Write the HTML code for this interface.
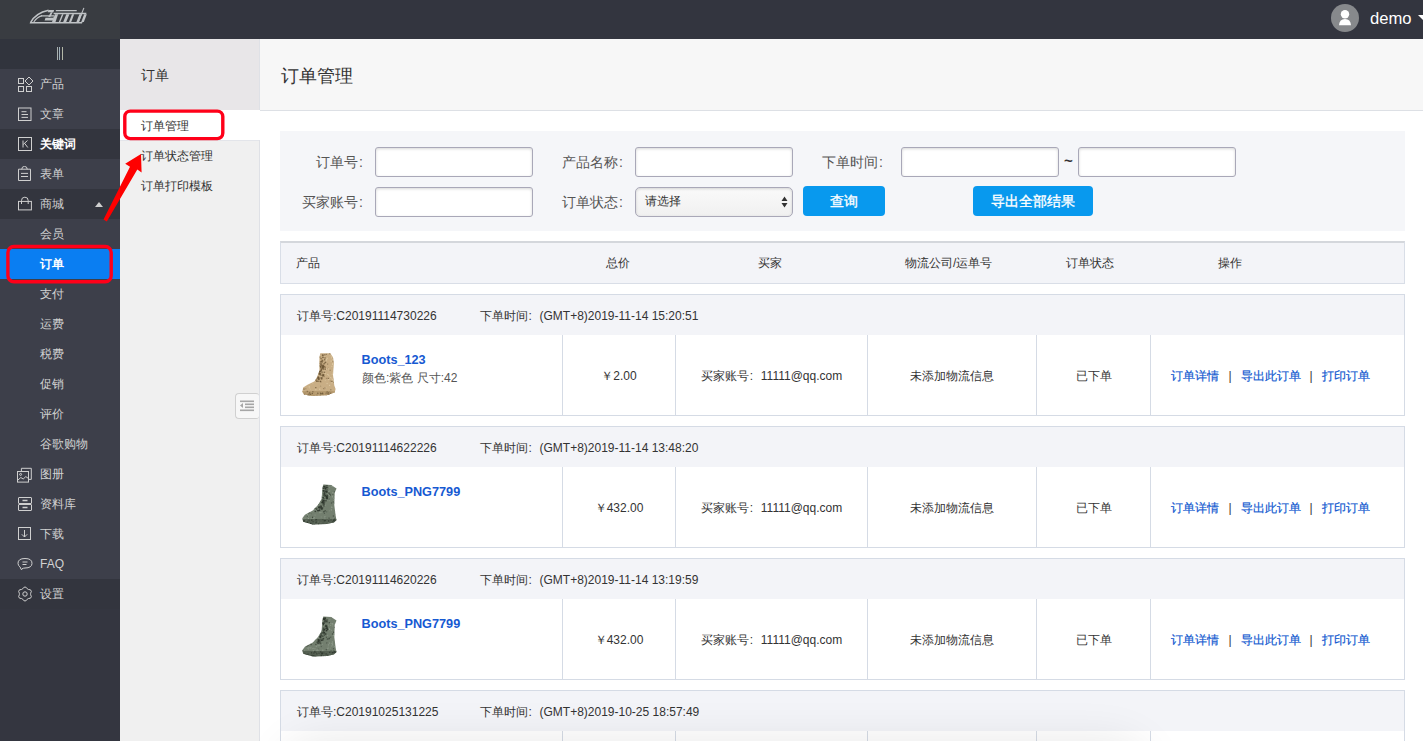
<!DOCTYPE html>
<html><head><meta charset="utf-8">
<style>
*{box-sizing:border-box;margin:0;padding:0}
html,body{width:1423px;height:741px;overflow:hidden;background:#fff;font-family:"Liberation Sans",sans-serif;font-size:12px;color:#333}
.abs{position:absolute}
#topbar{left:0;top:0;width:1423px;height:39px;background:#33353f}
#logo{left:0;top:0;width:120px;height:39px;background:#393c41}
#side{left:0;top:39px;width:120px;height:702px;background:#343640}
#toggle{left:0;top:39px;width:120px;height:30px;background:#31343d}
.mi{position:absolute;left:0;width:120px;height:30px;background:#3d3f4a;color:#d2d2d2;font-size:12px;line-height:30px;padding-left:40px}
.mi.dk{background:#33353e}
.mi.b{color:#fff;font-weight:bold}
.mi.act{background:#0a7ef2;color:#fff;font-weight:bold}
.mi svg{position:absolute;left:17px;top:7px}
#sub{left:120px;top:39px;width:140px;height:702px;background:#f0f0f0;border-right:1px solid #dfe1e6}
#subhd{left:120px;top:39px;width:139px;height:71px;background:#e8e6e8;font-size:14px;line-height:73px;padding-left:21px;color:#333}
.si{position:absolute;left:120px;width:139px;height:30px;line-height:32px;padding-left:21px;font-size:12px;color:#333}
#main{left:260px;top:39px;width:1163px;height:702px;background:#fff}
#mainhd{left:260px;top:39px;width:1163px;height:72px;background:#f7f7f7;border-bottom:1px solid #dde0e5;font-size:18px;line-height:74px;padding-left:21px;color:#333}
#filter{left:280px;top:131px;width:1125px;height:100px;background:#f5f6f9}
.lbl{position:absolute;font-size:14px;color:#555;line-height:30px;white-space:nowrap}
.co{margin-left:1px}
.inp{position:absolute;height:30px;background:#fff;border:1px solid #a9a8b8;border-radius:3px;box-shadow:inset 0 1px 3px rgba(0,0,0,.16)}
.btn{position:absolute;height:30px;background:#0899ee;color:#fff;border-radius:4px;font-size:14px;line-height:30px;text-align:center;-webkit-text-stroke:0.35px #fff}
#thd{left:280px;top:241px;width:1125px;height:43px;background:#f3f4f8;border:1px solid #d9dee7;border-top:2px solid #d4d7dc}
.th{position:absolute;top:242px;line-height:43px;font-size:12px;color:#333}
.ord{position:absolute;left:280px;width:1125px;height:122px;border:1px solid #d5dbe5;background:#fff}
.ohd{position:absolute;left:0;top:0;width:1123px;height:40px;background:#f3f4f8;line-height:42px;padding-left:16px;font-size:12px;color:#333}
.cell{position:absolute;top:41px;height:80px;line-height:80px;text-align:center;font-size:12px;color:#333}
.vl{position:absolute;top:40px;width:1px;height:80px;background:#d5dbe5}
.lk{color:#1259d0;-webkit-text-stroke:0.2px #1259d0}
.fc{display:inline-block;width:12px;padding-left:1px;text-align:left}
</style></head><body>
<div id="topbar" class="abs"></div>
<div id="logo" class="abs"></div>
<div id="side" class="abs"></div>
<div id="toggle" class="abs"></div>
<div class="mi" style="top:69px"><svg width="17" height="17" viewBox="0 0 17 17" fill="none" stroke="#cfcfcf" stroke-width="1"><rect x="1.5" y="2.5" width="5" height="5"/><path d="M12 1 L16 5 L12 9 L8 5 Z"/><rect x="1.5" y="10.5" width="5" height="5"/><rect x="9.5" y="10.5" width="5" height="5"/></svg>产品</div>
<div class="mi" style="top:99px"><svg width="17" height="17" viewBox="0 0 17 17" fill="none" stroke="#cfcfcf" stroke-width="1"><rect x="1.5" y="2" width="12.5" height="12.5"/><path d="M4.5 5.7 H9.5 M4.5 8.5 H11 M4.5 11.4 H11"/></svg>文章</div>
<div class="mi dk b" style="top:129px"><svg width="17" height="17" viewBox="0 0 17 17" fill="none" stroke="#cfcfcf" stroke-width="1"><rect x="1.5" y="1.5" width="13" height="13"/><path d="M6 4.5 V11.5 M10.5 4.5 L6.2 8.5 M7.6 7.3 L10.8 11.5"/></svg>关键词</div>
<div class="mi" style="top:159px"><svg width="17" height="17" viewBox="0 0 17 17" fill="none" stroke="#cfcfcf" stroke-width="1"><path d="M5 3.2 H1.5 V14.5 H13.5 V3.2 H10"/><path d="M4.8 3.2 Q4.8 0.4 7.5 0.4 Q10.2 0.4 10.2 3.2 Z"/><path d="M4 7.4 H11 M4 10.5 H11"/></svg>表单</div>
<div class="mi dk" style="top:189px"><svg width="17" height="17" viewBox="0 0 17 17" fill="none" stroke="#cfcfcf" stroke-width="1"><rect x="1.5" y="5.4" width="12.9" height="8.5"/><path d="M4.5 8 V4.5 Q4.5 1.2 7.85 1.2 Q11.2 1.2 11.2 4.5 V8"/></svg>商城<span style="position:absolute;left:95px;top:13px;width:0;height:0;border-left:4px solid transparent;border-right:4px solid transparent;border-bottom:5px solid #cfcfcf"></span></div>
<div class="mi" style="top:219px">会员</div>
<div class="mi act" style="top:249px">订单</div>
<div class="mi" style="top:279px">支付</div>
<div class="mi" style="top:309px">运费</div>
<div class="mi" style="top:339px">税费</div>
<div class="mi" style="top:369px">促销</div>
<div class="mi" style="top:399px">评价</div>
<div class="mi" style="top:429px">谷歌购物</div>
<div class="mi" style="top:459px"><svg width="17" height="17" viewBox="0 0 17 17" fill="none" stroke="#cfcfcf" stroke-width="1"><path d="M4.4 5 V2.3 H14.3 V13.4 H12"/><rect x="0.5" y="5.5" width="11" height="10.6"/><circle cx="3.6" cy="8.4" r="1"/><path d="M1 14 L3.8 11.5 L6.2 13 L8.8 10.6 L11.2 12.3"/></svg>图册</div>
<div class="mi" style="top:489px"><svg width="17" height="17" viewBox="0 0 17 17" fill="none" stroke="#cfcfcf" stroke-width="1"><rect x="1.5" y="1.5" width="13" height="6" rx="0.5"/><rect x="1.5" y="8.5" width="13" height="6" rx="0.5"/><path d="M5.5 4.5 H10.5 M5.5 11.5 H10.5" stroke-width="1.5"/></svg>资料库</div>
<div class="mi" style="top:519px"><svg width="17" height="17" viewBox="0 0 17 17" fill="none" stroke="#cfcfcf" stroke-width="1"><rect x="1.5" y="1.5" width="12" height="12"/><path d="M7.5 4 V11 M4.8 8.3 L7.5 11 L10.2 8.3"/></svg>下载</div>
<div class="mi" style="top:549px"><svg width="17" height="17" viewBox="0 0 17 17" fill="none" stroke="#cfcfcf" stroke-width="1"><path d="M4.5 13.8 Q3 11.5 3.2 11 Q1 9.8 1 7.3 Q1 2.5 8 2.5 Q15 2.5 15 7.3 Q15 12 8 12 Q6.5 12 5 12.8 Z"/><path d="M5.5 6 H10.5 M5.5 8.5 H9.5"/></svg>FAQ</div>
<div class="mi dk" style="top:579px"><svg width="17" height="17" viewBox="0 0 17 17" fill="none" stroke="#cfcfcf" stroke-width="1"><path d="M7.10,1.16 L8.90,1.16 L10.18,2.73 L11.47,3.48 L13.47,3.80 L14.37,5.36 L13.65,7.26 L13.65,8.74 L14.37,10.64 L13.47,12.20 L11.47,12.52 L10.18,13.27 L8.90,14.84 L7.10,14.84 L5.82,13.27 L4.53,12.52 L2.53,12.20 L1.63,10.64 L2.35,8.74 L2.35,7.26 L1.63,5.36 L2.53,3.80 L4.53,3.48 L5.82,2.73 Z" stroke-linejoin="round"/><circle cx="8" cy="8" r="2.2"/></svg>设置</div>

<div id="sub" class="abs"></div>
<div id="subhd" class="abs">订单</div>
<div class="si" style="top:110px;background:#fff;width:140px">订单管理</div>
<div class="abs" style="left:120px;top:140px;width:139px;height:1px;background:#e3e5ea"></div>
<div class="si" style="top:140px">订单状态管理</div>
<div class="si" style="top:170px">订单打印模板</div>

<div id="main" class="abs"></div>
<div id="mainhd" class="abs">订单管理</div>
<div id="filter" class="abs"></div>

<div class="lbl" style="left:316px;top:147px">订单号<span class="co">:</span></div>
<div class="inp" style="left:375px;top:147px;width:158px"></div>
<div class="lbl" style="left:302px;top:187px">买家账号<span class="co">:</span></div>
<div class="inp" style="left:375px;top:187px;width:158px"></div>
<div class="lbl" style="left:562px;top:147px">产品名称<span class="co">:</span></div>
<div class="inp" style="left:635px;top:147px;width:158px"></div>
<div class="lbl" style="left:562px;top:187px">订单状态<span class="co">:</span></div>
<div class="inp sel" style="left:635px;top:187px;width:158px;border-radius:5px;background:linear-gradient(#fafafa,#f0f0f0);font-size:12px;line-height:26px;padding-left:9px;color:#333">请选择<svg style="position:absolute;right:4px;top:8px" width="7" height="12" viewBox="0 0 7 12"><path d="M3.5 0.5 L6.5 5 H0.5 Z M3.5 11.5 L6.5 7 H0.5 Z" fill="#333"/></svg></div>
<div class="lbl" style="left:822px;top:147px">下单时间<span class="co">:</span></div>
<div class="inp" style="left:901px;top:147px;width:158px"></div>
<div class="abs" style="left:1064px;top:146px;line-height:30px;font-size:15px;font-weight:bold;color:#333">~</div>
<div class="inp" style="left:1078px;top:147px;width:158px"></div>
<div class="btn" style="left:803px;top:186px;width:82px">查询</div>
<div class="btn" style="left:973px;top:186px;width:120px">导出全部结果</div>

<div id="thd" class="abs"></div>
<div class="th" style="left:296px">产品</div>
<div class="th" style="left:606px">总价</div>
<div class="th" style="left:758px">买家</div>
<div class="th" style="left:905px">物流公司/运单号</div>
<div class="th" style="left:1066px">订单状态</div>
<div class="th" style="left:1218px">操作</div>
<div class="ord" style="top:294px">
<div class="ohd">订单号:C20191114730226<span style="position:absolute;left:198.5px">下单时间<span class="fc">:</span>(GMT+8)2019-11-14 15:20:51</span></div>
<div class="vl" style="left:281px"></div><div class="vl" style="left:394px"></div><div class="vl" style="left:586px"></div><div class="vl" style="left:755px"></div><div class="vl" style="left:869px"></div>
<div style="position:absolute;left:21px;top:58px;width:35px;height:44px"><svg width="35" height="44" viewBox="0 0 35 44"><defs><clipPath id="ct"><path d="M18.3,0.2 L28.4,0.2 L31.0,4.5 L31.9,9.8 L31.0,22.0 L32.3,32.6 L33.6,36.0 L32.7,39.6 L24.8,42.3 L9.9,43.1 L2.0,41.4 L0.3,38.8 L1.2,34.4 L5.5,31.7 L12.6,28.2 L15.2,23.8 L17.4,17.7 L17.4,4.5 Z"/></clipPath></defs><path d="M18.3,0.2 L28.4,0.2 L31.0,4.5 L31.9,9.8 L31.0,22.0 L32.3,32.6 L33.6,36.0 L32.7,39.6 L24.8,42.3 L9.9,43.1 L2.0,41.4 L0.3,38.8 L1.2,34.4 L5.5,31.7 L12.6,28.2 L15.2,23.8 L17.4,17.7 L17.4,4.5 Z" fill="#c9ae85"/><g clip-path="url(#ct)"><rect x="8.3" y="23.9" width="1.2" height="1.2" fill="#e2cfaa" opacity="0.76"/><rect x="16.6" y="25.6" width="1.2" height="1.2" fill="#6b5535" opacity="0.75"/><rect x="16.4" y="24.2" width="1.2" height="1.2" fill="#e2cfaa" opacity="0.80"/><rect x="16.5" y="36.8" width="1.2" height="1.2" fill="#c9ae85" opacity="0.50"/><rect x="30.1" y="10.2" width="1.2" height="1.2" fill="#e2cfaa" opacity="0.73"/><rect x="18.3" y="32.6" width="1.2" height="1.2" fill="#6b5535" opacity="0.38"/><rect x="33.5" y="1.9" width="1.2" height="1.2" fill="#6b5535" opacity="0.71"/><rect x="9.4" y="26.2" width="1.2" height="1.2" fill="#c9ae85" opacity="0.66"/><rect x="32.2" y="17.4" width="1.2" height="1.2" fill="#c9ae85" opacity="0.78"/><rect x="4.7" y="16.1" width="1.2" height="1.2" fill="#6b5535" opacity="0.37"/><rect x="7.6" y="42.5" width="1.2" height="1.2" fill="#c9ae85" opacity="0.69"/><rect x="29.9" y="18.5" width="1.2" height="1.2" fill="#c9ae85" opacity="0.59"/><rect x="18.7" y="17.9" width="1.2" height="1.2" fill="#e2cfaa" opacity="0.75"/><rect x="23.9" y="40.9" width="1.2" height="1.2" fill="#e2cfaa" opacity="0.80"/><rect x="23.5" y="7.2" width="1.2" height="1.2" fill="#e2cfaa" opacity="0.78"/><rect x="31.7" y="25.0" width="1.2" height="1.2" fill="#e2cfaa" opacity="0.62"/><rect x="34.6" y="11.8" width="1.2" height="1.2" fill="#6b5535" opacity="0.33"/><rect x="29.9" y="43.6" width="1.2" height="1.2" fill="#6b5535" opacity="0.47"/><rect x="2.3" y="39.5" width="1.2" height="1.2" fill="#6b5535" opacity="0.45"/><rect x="26.9" y="38.4" width="1.2" height="1.2" fill="#6b5535" opacity="0.60"/><rect x="26.7" y="16.6" width="1.2" height="1.2" fill="#e2cfaa" opacity="0.58"/><rect x="32.3" y="12.3" width="1.2" height="1.2" fill="#e2cfaa" opacity="0.80"/><rect x="10.8" y="3.4" width="1.2" height="1.2" fill="#6b5535" opacity="0.77"/><rect x="34.0" y="12.8" width="1.2" height="1.2" fill="#e2cfaa" opacity="0.38"/><rect x="1.5" y="38.2" width="1.2" height="1.2" fill="#e2cfaa" opacity="0.48"/><rect x="4.8" y="37.9" width="1.2" height="1.2" fill="#c9ae85" opacity="0.53"/><rect x="18.2" y="28.3" width="1.2" height="1.2" fill="#6b5535" opacity="0.61"/><rect x="32.9" y="22.3" width="1.2" height="1.2" fill="#c9ae85" opacity="0.62"/><rect x="25.0" y="41.2" width="1.2" height="1.2" fill="#c9ae85" opacity="0.79"/><rect x="18.2" y="24.1" width="1.2" height="1.2" fill="#6b5535" opacity="0.69"/><rect x="34.6" y="13.9" width="1.2" height="1.2" fill="#c9ae85" opacity="0.61"/><rect x="22.1" y="2.6" width="1.2" height="1.2" fill="#e2cfaa" opacity="0.53"/><rect x="23.8" y="15.5" width="1.2" height="1.2" fill="#e2cfaa" opacity="0.67"/><rect x="0.8" y="2.7" width="1.2" height="1.2" fill="#6b5535" opacity="0.78"/><rect x="8.8" y="20.1" width="1.2" height="1.2" fill="#e2cfaa" opacity="0.39"/><rect x="6.5" y="33.4" width="1.2" height="1.2" fill="#e2cfaa" opacity="0.45"/><rect x="13.2" y="34.0" width="1.2" height="1.2" fill="#6b5535" opacity="0.79"/><rect x="23.9" y="5.8" width="1.2" height="1.2" fill="#e2cfaa" opacity="0.63"/><rect x="9.4" y="14.4" width="1.2" height="1.2" fill="#c9ae85" opacity="0.62"/><rect x="3.4" y="26.4" width="1.2" height="1.2" fill="#e2cfaa" opacity="0.64"/><rect x="7.9" y="35.6" width="1.2" height="1.2" fill="#e2cfaa" opacity="0.34"/><rect x="26.0" y="9.6" width="1.2" height="1.2" fill="#c9ae85" opacity="0.44"/><rect x="27.5" y="1.5" width="1.2" height="1.2" fill="#e2cfaa" opacity="0.46"/><rect x="29.3" y="25.3" width="1.2" height="1.2" fill="#e2cfaa" opacity="0.47"/><rect x="29.0" y="3.8" width="1.2" height="1.2" fill="#e2cfaa" opacity="0.59"/><rect x="14.7" y="22.8" width="1.2" height="1.2" fill="#e2cfaa" opacity="0.53"/><rect x="22.2" y="12.8" width="1.2" height="1.2" fill="#c9ae85" opacity="0.32"/><rect x="14.5" y="8.8" width="1.2" height="1.2" fill="#c9ae85" opacity="0.77"/><rect x="30.8" y="43.4" width="1.2" height="1.2" fill="#c9ae85" opacity="0.58"/><rect x="34.5" y="31.6" width="1.2" height="1.2" fill="#6b5535" opacity="0.67"/><rect x="29.3" y="29.2" width="1.2" height="1.2" fill="#e2cfaa" opacity="0.57"/><rect x="31.1" y="37.9" width="1.2" height="1.2" fill="#e2cfaa" opacity="0.36"/><rect x="8.6" y="1.5" width="1.2" height="1.2" fill="#e2cfaa" opacity="0.75"/><rect x="31.5" y="25.4" width="1.2" height="1.2" fill="#6b5535" opacity="0.54"/><rect x="4.2" y="22.1" width="1.2" height="1.2" fill="#e2cfaa" opacity="0.63"/><rect x="18.4" y="18.2" width="1.2" height="1.2" fill="#6b5535" opacity="0.47"/><rect x="8.8" y="37.9" width="1.2" height="1.2" fill="#c9ae85" opacity="0.71"/><rect x="2.1" y="9.7" width="1.2" height="1.2" fill="#6b5535" opacity="0.57"/><rect x="28.6" y="7.5" width="1.2" height="1.2" fill="#e2cfaa" opacity="0.76"/><rect x="28.2" y="36.2" width="1.2" height="1.2" fill="#6b5535" opacity="0.54"/><rect x="20.0" y="17.6" width="1.2" height="1.2" fill="#e2cfaa" opacity="0.42"/><rect x="21.6" y="22.9" width="1.2" height="1.2" fill="#6b5535" opacity="0.54"/><rect x="27.2" y="0.1" width="1.2" height="1.2" fill="#6b5535" opacity="0.69"/><rect x="1.6" y="2.2" width="1.2" height="1.2" fill="#c9ae85" opacity="0.79"/><rect x="29.9" y="3.8" width="1.2" height="1.2" fill="#c9ae85" opacity="0.46"/><rect x="11.0" y="15.5" width="1.2" height="1.2" fill="#c9ae85" opacity="0.59"/><rect x="12.6" y="8.4" width="1.2" height="1.2" fill="#e2cfaa" opacity="0.51"/><rect x="4.5" y="0.2" width="1.2" height="1.2" fill="#c9ae85" opacity="0.70"/><rect x="19.8" y="1.9" width="1.2" height="1.2" fill="#c9ae85" opacity="0.60"/><rect x="27.4" y="16.7" width="1.2" height="1.2" fill="#6b5535" opacity="0.61"/><rect x="15.1" y="16.4" width="1.2" height="1.2" fill="#c9ae85" opacity="0.68"/><rect x="11.0" y="41.8" width="1.2" height="1.2" fill="#c9ae85" opacity="0.53"/><rect x="8.6" y="23.6" width="1.2" height="1.2" fill="#6b5535" opacity="0.70"/><rect x="7.9" y="5.7" width="1.2" height="1.2" fill="#6b5535" opacity="0.77"/><rect x="13.1" y="39.5" width="1.2" height="1.2" fill="#e2cfaa" opacity="0.36"/><rect x="24.2" y="41.3" width="1.2" height="1.2" fill="#c9ae85" opacity="0.63"/><rect x="25.7" y="24.8" width="1.2" height="1.2" fill="#6b5535" opacity="0.71"/><rect x="25.1" y="20.8" width="1.2" height="1.2" fill="#e2cfaa" opacity="0.69"/><rect x="1.6" y="4.0" width="1.2" height="1.2" fill="#6b5535" opacity="0.63"/><rect x="13.2" y="36.1" width="1.2" height="1.2" fill="#e2cfaa" opacity="0.72"/><rect x="4.2" y="37.1" width="1.2" height="1.2" fill="#c9ae85" opacity="0.72"/><rect x="33.3" y="25.5" width="1.2" height="1.2" fill="#6b5535" opacity="0.32"/><rect x="26.9" y="22.5" width="1.2" height="1.2" fill="#e2cfaa" opacity="0.35"/><rect x="26.2" y="41.1" width="1.2" height="1.2" fill="#6b5535" opacity="0.58"/><rect x="30.4" y="7.9" width="1.2" height="1.2" fill="#6b5535" opacity="0.42"/><rect x="6.3" y="11.0" width="1.2" height="1.2" fill="#c9ae85" opacity="0.43"/><rect x="21.0" y="41.3" width="1.2" height="1.2" fill="#c9ae85" opacity="0.78"/><rect x="13.1" y="10.4" width="1.2" height="1.2" fill="#c9ae85" opacity="0.72"/><rect x="33.8" y="18.3" width="1.2" height="1.2" fill="#c9ae85" opacity="0.38"/><rect x="14.0" y="39.1" width="1.2" height="1.2" fill="#e2cfaa" opacity="0.35"/><rect x="26.2" y="40.3" width="1.2" height="1.2" fill="#c9ae85" opacity="0.59"/><rect x="30.0" y="6.0" width="1.2" height="1.2" fill="#e2cfaa" opacity="0.37"/><rect x="18.0" y="41.1" width="1.2" height="1.2" fill="#e2cfaa" opacity="0.64"/><rect x="29.9" y="26.2" width="1.2" height="1.2" fill="#e2cfaa" opacity="0.74"/><rect x="10.8" y="11.8" width="1.2" height="1.2" fill="#c9ae85" opacity="0.40"/><rect x="19.9" y="10.5" width="1.2" height="1.2" fill="#c9ae85" opacity="0.69"/><rect x="5.0" y="43.6" width="1.2" height="1.2" fill="#c9ae85" opacity="0.65"/><rect x="7.2" y="25.5" width="1.2" height="1.2" fill="#6b5535" opacity="0.54"/><rect x="25.2" y="37.7" width="1.2" height="1.2" fill="#c9ae85" opacity="0.69"/><rect x="30.9" y="2.0" width="1.2" height="1.2" fill="#e2cfaa" opacity="0.75"/><rect x="22.7" y="34.2" width="1.2" height="1.2" fill="#6b5535" opacity="0.78"/><rect x="29.9" y="10.7" width="1.2" height="1.2" fill="#e2cfaa" opacity="0.69"/><rect x="4.8" y="27.4" width="1.2" height="1.2" fill="#6b5535" opacity="0.75"/><rect x="8.9" y="38.1" width="1.2" height="1.2" fill="#e2cfaa" opacity="0.39"/><rect x="3.2" y="35.2" width="1.2" height="1.2" fill="#6b5535" opacity="0.35"/><rect x="29.2" y="12.8" width="1.2" height="1.2" fill="#e2cfaa" opacity="0.53"/><rect x="25.7" y="14.8" width="1.2" height="1.2" fill="#6b5535" opacity="0.47"/><rect x="15.3" y="21.4" width="1.2" height="1.2" fill="#e2cfaa" opacity="0.62"/><rect x="26.0" y="21.6" width="1.2" height="1.2" fill="#e2cfaa" opacity="0.57"/><rect x="4.2" y="12.1" width="1.2" height="1.2" fill="#c9ae85" opacity="0.36"/><rect x="31.1" y="40.0" width="1.2" height="1.2" fill="#6b5535" opacity="0.56"/><rect x="24.5" y="29.9" width="1.2" height="1.2" fill="#e2cfaa" opacity="0.68"/><rect x="10.3" y="29.7" width="1.2" height="1.2" fill="#e2cfaa" opacity="0.35"/><rect x="33.1" y="14.9" width="1.2" height="1.2" fill="#6b5535" opacity="0.63"/><rect x="17.8" y="2.6" width="1.2" height="1.2" fill="#e2cfaa" opacity="0.64"/><rect x="19.8" y="8.0" width="1.2" height="1.2" fill="#e2cfaa" opacity="0.39"/><rect x="31.1" y="28.8" width="1.2" height="1.2" fill="#6b5535" opacity="0.35"/><rect x="19.6" y="40.5" width="1.2" height="1.2" fill="#c9ae85" opacity="0.58"/><rect x="22.7" y="20.1" width="1.2" height="1.2" fill="#e2cfaa" opacity="0.69"/><rect x="24.7" y="4.7" width="1.2" height="1.2" fill="#e2cfaa" opacity="0.68"/><rect x="19.0" y="32.5" width="1.2" height="1.2" fill="#e2cfaa" opacity="0.35"/><rect x="9.5" y="2.4" width="1.2" height="1.2" fill="#e2cfaa" opacity="0.32"/><rect x="17.7" y="10.9" width="1.2" height="1.2" fill="#e2cfaa" opacity="0.74"/><rect x="33.1" y="19.7" width="1.2" height="1.2" fill="#6b5535" opacity="0.48"/><rect x="29.6" y="4.9" width="1.2" height="1.2" fill="#e2cfaa" opacity="0.60"/><rect x="23.9" y="24.8" width="1.2" height="1.2" fill="#6b5535" opacity="0.39"/><rect x="6.6" y="18.3" width="1.2" height="1.2" fill="#c9ae85" opacity="0.71"/><rect x="26.2" y="26.0" width="1.2" height="1.2" fill="#e2cfaa" opacity="0.73"/><rect x="27.9" y="24.0" width="1.2" height="1.2" fill="#e2cfaa" opacity="0.58"/><rect x="7.1" y="11.0" width="1.2" height="1.2" fill="#e2cfaa" opacity="0.32"/><rect x="28.1" y="39.2" width="1.2" height="1.2" fill="#c9ae85" opacity="0.46"/><rect x="31.7" y="13.6" width="1.2" height="1.2" fill="#c9ae85" opacity="0.79"/><rect x="24.0" y="13.2" width="1.2" height="1.2" fill="#c9ae85" opacity="0.32"/><rect x="6.7" y="27.9" width="1.2" height="1.2" fill="#6b5535" opacity="0.69"/><rect x="23.2" y="21.6" width="1.2" height="1.2" fill="#c9ae85" opacity="0.40"/><rect x="27.4" y="9.3" width="1.2" height="1.2" fill="#c9ae85" opacity="0.36"/><rect x="9.9" y="28.9" width="1.2" height="1.2" fill="#e2cfaa" opacity="0.37"/><rect x="27.7" y="27.4" width="1.2" height="1.2" fill="#6b5535" opacity="0.31"/><rect x="21.6" y="22.3" width="1.2" height="1.2" fill="#c9ae85" opacity="0.57"/><rect x="32.5" y="14.2" width="1.2" height="1.2" fill="#e2cfaa" opacity="0.65"/><rect x="4.7" y="37.8" width="1.2" height="1.2" fill="#6b5535" opacity="0.66"/><rect x="25.9" y="15.1" width="1.2" height="1.2" fill="#e2cfaa" opacity="0.77"/><rect x="30.2" y="19.2" width="1.2" height="1.2" fill="#e2cfaa" opacity="0.54"/><rect x="3.8" y="1.9" width="1.2" height="1.2" fill="#6b5535" opacity="0.72"/><rect x="24.7" y="17.2" width="1.2" height="1.2" fill="#c9ae85" opacity="0.65"/><rect x="18.8" y="18.6" width="1.2" height="1.2" fill="#c9ae85" opacity="0.45"/><rect x="16.3" y="33.3" width="1.2" height="1.2" fill="#c9ae85" opacity="0.52"/><rect x="15.9" y="1.6" width="1.2" height="1.2" fill="#e2cfaa" opacity="0.48"/><rect x="13.0" y="23.3" width="1.2" height="1.2" fill="#c9ae85" opacity="0.41"/><rect x="0.1" y="9.2" width="1.2" height="1.2" fill="#e2cfaa" opacity="0.37"/><rect x="16.1" y="8.6" width="1.2" height="1.2" fill="#e2cfaa" opacity="0.31"/><rect x="20.5" y="22.2" width="1.2" height="1.2" fill="#6b5535" opacity="0.37"/><rect x="21.3" y="19.5" width="1.2" height="1.2" fill="#e2cfaa" opacity="0.33"/><rect x="0.8" y="19.7" width="1.2" height="1.2" fill="#c9ae85" opacity="0.32"/><rect x="25.0" y="10.5" width="1.2" height="1.2" fill="#6b5535" opacity="0.50"/><rect x="0.9" y="42.5" width="1.2" height="1.2" fill="#e2cfaa" opacity="0.42"/><rect x="13.6" y="8.4" width="1.2" height="1.2" fill="#e2cfaa" opacity="0.61"/><rect x="12.1" y="5.5" width="1.2" height="1.2" fill="#6b5535" opacity="0.70"/><rect x="10.2" y="43.2" width="1.2" height="1.2" fill="#c9ae85" opacity="0.69"/><rect x="33.7" y="21.5" width="1.2" height="1.2" fill="#e2cfaa" opacity="0.32"/><rect x="11.8" y="43.7" width="1.2" height="1.2" fill="#e2cfaa" opacity="0.35"/><rect x="23.9" y="42.6" width="1.2" height="1.2" fill="#6b5535" opacity="0.35"/><rect x="23.8" y="0.8" width="1.2" height="1.2" fill="#6b5535" opacity="0.54"/><rect x="6.6" y="22.4" width="1.2" height="1.2" fill="#e2cfaa" opacity="0.40"/><rect x="34.1" y="21.0" width="1.2" height="1.2" fill="#c9ae85" opacity="0.76"/><rect x="32.9" y="1.5" width="1.2" height="1.2" fill="#e2cfaa" opacity="0.68"/><rect x="22.1" y="17.4" width="1.2" height="1.2" fill="#e2cfaa" opacity="0.39"/><rect x="14.5" y="22.3" width="1.2" height="1.2" fill="#e2cfaa" opacity="0.57"/><rect x="27.2" y="17.7" width="1.2" height="1.2" fill="#c9ae85" opacity="0.72"/><rect x="19.4" y="40.6" width="1.2" height="1.2" fill="#e2cfaa" opacity="0.70"/><rect x="15.3" y="19.6" width="1.2" height="1.2" fill="#c9ae85" opacity="0.47"/><rect x="28.7" y="22.3" width="1.2" height="1.2" fill="#c9ae85" opacity="0.77"/><rect x="1.5" y="7.6" width="1.2" height="1.2" fill="#6b5535" opacity="0.71"/><rect x="3.2" y="30.4" width="1.2" height="1.2" fill="#6b5535" opacity="0.46"/><rect x="21.0" y="35.3" width="1.2" height="1.2" fill="#6b5535" opacity="0.74"/><rect x="30.5" y="19.8" width="1.2" height="1.2" fill="#e2cfaa" opacity="0.80"/><rect x="0.1" y="8.6" width="1.2" height="1.2" fill="#6b5535" opacity="0.47"/><rect x="10.9" y="19.8" width="1.2" height="1.2" fill="#e2cfaa" opacity="0.42"/><rect x="1.7" y="6.7" width="1.2" height="1.2" fill="#e2cfaa" opacity="0.59"/><rect x="0.4" y="10.1" width="1.2" height="1.2" fill="#e2cfaa" opacity="0.41"/><rect x="19.7" y="18.5" width="1.2" height="1.2" fill="#e2cfaa" opacity="0.69"/><rect x="18.7" y="8.3" width="1.2" height="1.2" fill="#e2cfaa" opacity="0.61"/><rect x="1.4" y="35.5" width="1.2" height="1.2" fill="#6b5535" opacity="0.73"/><rect x="3.5" y="41.5" width="1.2" height="1.2" fill="#e2cfaa" opacity="0.34"/><rect x="16.3" y="9.8" width="1.2" height="1.2" fill="#6b5535" opacity="0.62"/><rect x="26.6" y="38.4" width="1.2" height="1.2" fill="#e2cfaa" opacity="0.50"/><rect x="23.1" y="34.2" width="1.2" height="1.2" fill="#e2cfaa" opacity="0.72"/><rect x="20.8" y="35.9" width="1.2" height="1.2" fill="#e2cfaa" opacity="0.36"/><rect x="0.3" y="13.2" width="1.2" height="1.2" fill="#6b5535" opacity="0.47"/><rect x="6.7" y="33.2" width="1.2" height="1.2" fill="#e2cfaa" opacity="0.51"/><rect x="22.7" y="26.7" width="1.2" height="1.2" fill="#e2cfaa" opacity="0.42"/><rect x="29.3" y="2.7" width="1.2" height="1.2" fill="#e2cfaa" opacity="0.52"/><rect x="2.9" y="9.6" width="1.2" height="1.2" fill="#e2cfaa" opacity="0.67"/><rect x="7.2" y="9.6" width="1.2" height="1.2" fill="#c9ae85" opacity="0.77"/><rect x="18.8" y="18.4" width="1.2" height="1.2" fill="#e2cfaa" opacity="0.75"/><rect x="33.2" y="21.3" width="1.2" height="1.2" fill="#c9ae85" opacity="0.53"/><rect x="20.6" y="1.5" width="1.2" height="1.2" fill="#6b5535" opacity="0.39"/><rect x="3.4" y="31.8" width="1.2" height="1.2" fill="#e2cfaa" opacity="0.55"/><rect x="2.1" y="20.8" width="1.2" height="1.2" fill="#e2cfaa" opacity="0.67"/><rect x="9.7" y="19.0" width="1.2" height="1.2" fill="#e2cfaa" opacity="0.53"/><rect x="6.9" y="34.4" width="1.2" height="1.2" fill="#e2cfaa" opacity="0.35"/><rect x="10.5" y="18.1" width="1.2" height="1.2" fill="#6b5535" opacity="0.40"/><rect x="17.1" y="35.6" width="1.2" height="1.2" fill="#e2cfaa" opacity="0.79"/><rect x="34.3" y="38.6" width="1.2" height="1.2" fill="#e2cfaa" opacity="0.77"/><rect x="15.1" y="41.4" width="1.2" height="1.2" fill="#c9ae85" opacity="0.56"/><rect x="19.0" y="15.8" width="1.2" height="1.2" fill="#e2cfaa" opacity="0.44"/><rect x="16.2" y="39.0" width="1.2" height="1.2" fill="#e2cfaa" opacity="0.67"/><rect x="32.6" y="22.9" width="1.2" height="1.2" fill="#6b5535" opacity="0.37"/><rect x="18.6" y="23.6" width="1.2" height="1.2" fill="#e2cfaa" opacity="0.78"/><rect x="0.1" y="43.3" width="1.2" height="1.2" fill="#c9ae85" opacity="0.48"/><rect x="33.8" y="16.0" width="1.2" height="1.2" fill="#6b5535" opacity="0.55"/><rect x="8.4" y="12.2" width="1.2" height="1.2" fill="#e2cfaa" opacity="0.72"/><rect x="21.1" y="35.7" width="1.2" height="1.2" fill="#c9ae85" opacity="0.46"/><rect x="8.7" y="35.3" width="1.2" height="1.2" fill="#c9ae85" opacity="0.66"/><rect x="11.9" y="1.3" width="1.2" height="1.2" fill="#6b5535" opacity="0.61"/><rect x="23.6" y="40.2" width="1.2" height="1.2" fill="#e2cfaa" opacity="0.78"/><rect x="26.0" y="37.0" width="1.2" height="1.2" fill="#c9ae85" opacity="0.55"/><rect x="29.1" y="24.3" width="1.2" height="1.2" fill="#e2cfaa" opacity="0.31"/><rect x="1.6" y="21.4" width="1.2" height="1.2" fill="#6b5535" opacity="0.75"/><rect x="31.7" y="20.6" width="1.2" height="1.2" fill="#c9ae85" opacity="0.49"/><rect x="22.1" y="12.9" width="1.2" height="1.2" fill="#6b5535" opacity="0.64"/><rect x="34.7" y="24.1" width="1.2" height="1.2" fill="#c9ae85" opacity="0.69"/><rect x="15.5" y="12.3" width="1.2" height="1.2" fill="#e2cfaa" opacity="0.53"/><rect x="33.6" y="6.8" width="1.2" height="1.2" fill="#e2cfaa" opacity="0.37"/><rect x="1.3" y="21.4" width="1.2" height="1.2" fill="#e2cfaa" opacity="0.71"/><rect x="32.6" y="26.9" width="1.2" height="1.2" fill="#6b5535" opacity="0.46"/><rect x="20.9" y="5.1" width="1.2" height="1.2" fill="#e2cfaa" opacity="0.44"/><rect x="24.8" y="40.1" width="1.2" height="1.2" fill="#6b5535" opacity="0.52"/><rect x="2.7" y="1.5" width="1.2" height="1.2" fill="#c9ae85" opacity="0.75"/><rect x="33.6" y="28.3" width="1.2" height="1.2" fill="#e2cfaa" opacity="0.46"/><rect x="12.1" y="28.8" width="1.2" height="1.2" fill="#c9ae85" opacity="0.46"/><rect x="9.5" y="41.8" width="1.2" height="1.2" fill="#e2cfaa" opacity="0.46"/><rect x="13.7" y="12.4" width="1.2" height="1.2" fill="#e2cfaa" opacity="0.51"/><rect x="14.5" y="39.6" width="1.2" height="1.2" fill="#c9ae85" opacity="0.41"/><rect x="7.0" y="3.5" width="1.2" height="1.2" fill="#6b5535" opacity="0.67"/><rect x="29.3" y="27.8" width="1.2" height="1.2" fill="#6b5535" opacity="0.77"/><rect x="34.1" y="30.5" width="1.2" height="1.2" fill="#c9ae85" opacity="0.43"/><rect x="16.9" y="11.8" width="1.2" height="1.2" fill="#6b5535" opacity="0.39"/><rect x="17.0" y="7.4" width="1.2" height="1.2" fill="#e2cfaa" opacity="0.75"/><rect x="6.2" y="43.7" width="1.2" height="1.2" fill="#c9ae85" opacity="0.62"/><rect x="5.0" y="2.4" width="1.2" height="1.2" fill="#e2cfaa" opacity="0.46"/><rect x="22.7" y="5.8" width="1.2" height="1.2" fill="#e2cfaa" opacity="0.32"/><rect x="33.6" y="23.5" width="1.2" height="1.2" fill="#c9ae85" opacity="0.69"/><rect x="15.2" y="8.0" width="1.2" height="1.2" fill="#6b5535" opacity="0.44"/><rect x="4.6" y="6.4" width="1.2" height="1.2" fill="#e2cfaa" opacity="0.49"/><rect x="32.8" y="26.6" width="1.2" height="1.2" fill="#e2cfaa" opacity="0.30"/><rect x="13.0" y="6.3" width="1.2" height="1.2" fill="#c9ae85" opacity="0.42"/><rect x="12.4" y="41.8" width="1.2" height="1.2" fill="#c9ae85" opacity="0.35"/><rect x="29.6" y="20.8" width="1.2" height="1.2" fill="#e2cfaa" opacity="0.57"/><rect x="29.9" y="19.5" width="1.2" height="1.2" fill="#c9ae85" opacity="0.53"/><rect x="18.8" y="19.5" width="1.2" height="1.2" fill="#c9ae85" opacity="0.72"/><rect x="7.0" y="26.1" width="1.2" height="1.2" fill="#e2cfaa" opacity="0.45"/><rect x="30.1" y="42.2" width="1.2" height="1.2" fill="#e2cfaa" opacity="0.43"/><rect x="7.1" y="2.3" width="1.2" height="1.2" fill="#6b5535" opacity="0.50"/><rect x="30.5" y="5.0" width="1.2" height="1.2" fill="#6b5535" opacity="0.38"/><rect x="4.3" y="17.7" width="1.2" height="1.2" fill="#e2cfaa" opacity="0.56"/><rect x="26.8" y="4.1" width="1.2" height="1.2" fill="#c9ae85" opacity="0.46"/><rect x="20.7" y="9.6" width="1.2" height="1.2" fill="#c9ae85" opacity="0.55"/><rect x="13.1" y="14.0" width="1.2" height="1.2" fill="#e2cfaa" opacity="0.65"/><rect x="27.0" y="31.8" width="1.2" height="1.2" fill="#e2cfaa" opacity="0.73"/><rect x="15.6" y="23.6" width="1.5" height="1.3" fill="#6b5535" opacity="0.94"/><rect x="17.7" y="8.3" width="1.5" height="1.3" fill="#6b5535" opacity="0.73"/><rect x="17.3" y="20.8" width="1.5" height="1.3" fill="#6b5535" opacity="0.79"/><rect x="22.8" y="8.6" width="1.5" height="1.3" fill="#6b5535" opacity="0.70"/><rect x="20.2" y="13.9" width="1.5" height="1.3" fill="#6b5535" opacity="0.89"/><rect x="15.4" y="27.6" width="1.5" height="1.3" fill="#6b5535" opacity="0.70"/><rect x="17.1" y="17.7" width="1.5" height="1.3" fill="#6b5535" opacity="0.69"/><rect x="18.8" y="23.9" width="1.5" height="1.3" fill="#6b5535" opacity="0.53"/><rect x="16.0" y="24.1" width="1.5" height="1.3" fill="#6b5535" opacity="0.94"/><rect x="18.3" y="10.9" width="1.5" height="1.3" fill="#6b5535" opacity="0.75"/><rect x="16.0" y="24.9" width="1.5" height="1.3" fill="#6b5535" opacity="0.89"/><rect x="17.7" y="20.2" width="1.5" height="1.3" fill="#6b5535" opacity="0.64"/><rect x="19.4" y="14.6" width="1.5" height="1.3" fill="#6b5535" opacity="0.67"/><rect x="21.6" y="18.6" width="1.5" height="1.3" fill="#6b5535" opacity="0.76"/><rect x="18.3" y="4.9" width="1.5" height="1.3" fill="#6b5535" opacity="0.67"/><rect x="17.5" y="17.6" width="1.5" height="1.3" fill="#6b5535" opacity="0.54"/><rect x="18.7" y="9.7" width="1.5" height="1.3" fill="#6b5535" opacity="0.51"/><rect x="22.5" y="15.5" width="1.5" height="1.3" fill="#6b5535" opacity="0.74"/><rect x="20.3" y="20.9" width="1.5" height="1.3" fill="#6b5535" opacity="0.88"/><rect x="15.7" y="25.7" width="1.5" height="1.3" fill="#6b5535" opacity="0.81"/><rect x="22.3" y="4.3" width="1.5" height="1.3" fill="#6b5535" opacity="0.67"/><rect x="22.3" y="13.8" width="1.5" height="1.3" fill="#6b5535" opacity="0.63"/><rect x="21.9" y="6.1" width="1.5" height="1.3" fill="#6b5535" opacity="0.77"/><rect x="17.2" y="3.3" width="1.5" height="1.3" fill="#6b5535" opacity="0.66"/><rect x="22.0" y="1.2" width="1.5" height="1.3" fill="#6b5535" opacity="0.58"/><rect x="19.3" y="8.4" width="1.5" height="1.3" fill="#6b5535" opacity="0.73"/><rect x="20.8" y="12.7" width="1.5" height="1.3" fill="#6b5535" opacity="0.80"/><rect x="17.6" y="12.8" width="1.5" height="1.3" fill="#6b5535" opacity="0.94"/><rect x="16.2" y="19.7" width="1.5" height="1.3" fill="#6b5535" opacity="0.70"/><rect x="21.2" y="21.3" width="1.5" height="1.3" fill="#6b5535" opacity="0.53"/><rect x="19.9" y="1.3" width="1.5" height="1.3" fill="#6b5535" opacity="0.69"/><rect x="18.6" y="25.1" width="1.5" height="1.3" fill="#6b5535" opacity="0.65"/><rect x="20.5" y="12.3" width="1.5" height="1.3" fill="#6b5535" opacity="0.90"/><rect x="19.4" y="6.5" width="1.5" height="1.3" fill="#6b5535" opacity="0.54"/><rect x="16.5" y="18.3" width="1.5" height="1.3" fill="#6b5535" opacity="0.92"/><rect x="20.4" y="15.1" width="1.5" height="1.3" fill="#6b5535" opacity="0.54"/><rect x="19.8" y="7.3" width="1.5" height="1.3" fill="#6b5535" opacity="0.89"/><rect x="18.7" y="15.6" width="1.5" height="1.3" fill="#6b5535" opacity="0.94"/><rect x="19.3" y="18.9" width="1.5" height="1.3" fill="#6b5535" opacity="0.59"/><rect x="22.4" y="9.1" width="1.5" height="1.3" fill="#6b5535" opacity="0.56"/><rect x="20.7" y="15.4" width="1.5" height="1.3" fill="#6b5535" opacity="0.66"/><rect x="20.5" y="21.8" width="1.5" height="1.3" fill="#6b5535" opacity="0.89"/><rect x="16.3" y="20.9" width="1.5" height="1.3" fill="#6b5535" opacity="0.53"/><rect x="18.9" y="12.7" width="1.5" height="1.3" fill="#6b5535" opacity="0.59"/><rect x="14.7" y="24.5" width="1.5" height="1.3" fill="#6b5535" opacity="0.87"/><rect x="13.2" y="26.3" width="1.5" height="1.3" fill="#6b5535" opacity="0.91"/><rect x="18.3" y="11.7" width="1.5" height="1.3" fill="#6b5535" opacity="0.58"/><rect x="20.0" y="2.0" width="1.5" height="1.3" fill="#6b5535" opacity="0.67"/><rect x="19.1" y="24.0" width="1.5" height="1.3" fill="#6b5535" opacity="0.53"/><rect x="19.3" y="11.8" width="1.5" height="1.3" fill="#6b5535" opacity="0.58"/><rect x="18.6" y="7.8" width="1.5" height="1.3" fill="#6b5535" opacity="0.81"/><rect x="17.7" y="10.2" width="1.5" height="1.3" fill="#6b5535" opacity="0.60"/><rect x="20.4" y="12.9" width="1.5" height="1.3" fill="#6b5535" opacity="0.61"/><rect x="16.9" y="19.9" width="1.5" height="1.3" fill="#6b5535" opacity="0.80"/><rect x="17.8" y="17.5" width="1.5" height="1.3" fill="#6b5535" opacity="0.84"/><rect x="20.2" y="11.6" width="1.5" height="1.3" fill="#6b5535" opacity="0.77"/><rect x="19.2" y="18.0" width="1.5" height="1.3" fill="#6b5535" opacity="0.53"/><rect x="20.0" y="22.2" width="1.5" height="1.3" fill="#6b5535" opacity="0.72"/><rect x="18.6" y="16.6" width="1.5" height="1.3" fill="#6b5535" opacity="0.90"/><rect x="17.1" y="19.5" width="1.5" height="1.3" fill="#6b5535" opacity="0.87"/><rect x="14.1" y="27.6" width="1.5" height="1.3" fill="#6b5535" opacity="0.95"/><rect x="18.1" y="14.0" width="1.5" height="1.3" fill="#6b5535" opacity="0.82"/><rect x="21.4" y="10.1" width="1.5" height="1.3" fill="#6b5535" opacity="0.76"/><rect x="20.2" y="3.9" width="1.5" height="1.3" fill="#6b5535" opacity="0.88"/><rect x="20.2" y="13.9" width="1.5" height="1.3" fill="#6b5535" opacity="0.89"/><rect x="20.0" y="13.1" width="1.5" height="1.3" fill="#6b5535" opacity="0.76"/><rect x="15.2" y="23.2" width="1.5" height="1.3" fill="#6b5535" opacity="0.54"/><rect x="18.3" y="21.6" width="1.5" height="1.3" fill="#6b5535" opacity="0.64"/><rect x="19.0" y="25.1" width="1.5" height="1.3" fill="#6b5535" opacity="0.74"/><rect x="17.6" y="27.7" width="1.5" height="1.3" fill="#6b5535" opacity="0.84"/><rect x="0" y="38" width="35" height="6" fill="#a58a5c" opacity="0.55"/><rect x="10.2" y="38.1" width="1.3" height="1.3" fill="#6b5535" opacity="0.64"/><rect x="25.7" y="40.1" width="1.3" height="1.3" fill="#6b5535" opacity="0.54"/><rect x="19.9" y="39.5" width="1.3" height="1.3" fill="#6b5535" opacity="0.65"/><rect x="19.7" y="40.3" width="1.3" height="1.3" fill="#6b5535" opacity="0.35"/><rect x="19.4" y="39.9" width="1.3" height="1.3" fill="#6b5535" opacity="0.66"/><rect x="6.0" y="40.4" width="1.3" height="1.3" fill="#6b5535" opacity="0.40"/><rect x="14.3" y="41.5" width="1.3" height="1.3" fill="#6b5535" opacity="0.35"/><rect x="1.9" y="40.9" width="1.3" height="1.3" fill="#6b5535" opacity="0.40"/><rect x="17.7" y="39.0" width="1.3" height="1.3" fill="#6b5535" opacity="0.35"/><rect x="18.8" y="43.5" width="1.3" height="1.3" fill="#6b5535" opacity="0.73"/><rect x="18.0" y="40.4" width="1.3" height="1.3" fill="#6b5535" opacity="0.33"/><rect x="9.7" y="39.9" width="1.3" height="1.3" fill="#6b5535" opacity="0.77"/><rect x="4.1" y="43.7" width="1.3" height="1.3" fill="#6b5535" opacity="0.54"/><rect x="15.2" y="39.6" width="1.3" height="1.3" fill="#6b5535" opacity="0.78"/><rect x="6.5" y="41.4" width="1.3" height="1.3" fill="#6b5535" opacity="0.56"/><rect x="7.0" y="39.3" width="1.3" height="1.3" fill="#6b5535" opacity="0.79"/><rect x="27.7" y="42.4" width="1.3" height="1.3" fill="#6b5535" opacity="0.75"/><rect x="3.4" y="42.2" width="1.3" height="1.3" fill="#6b5535" opacity="0.68"/><rect x="7.9" y="40.7" width="1.3" height="1.3" fill="#6b5535" opacity="0.79"/><rect x="11.4" y="42.6" width="1.3" height="1.3" fill="#6b5535" opacity="0.38"/><rect x="23.4" y="39.6" width="1.3" height="1.3" fill="#6b5535" opacity="0.55"/><rect x="13.0" y="43.2" width="1.3" height="1.3" fill="#6b5535" opacity="0.67"/><rect x="17.6" y="42.1" width="1.3" height="1.3" fill="#6b5535" opacity="0.51"/><rect x="28.1" y="39.5" width="1.3" height="1.3" fill="#6b5535" opacity="0.57"/><rect x="20.5" y="40.3" width="1.3" height="1.3" fill="#6b5535" opacity="0.32"/><rect x="5.9" y="41.8" width="1.3" height="1.3" fill="#6b5535" opacity="0.41"/><rect x="26.5" y="41.0" width="1.3" height="1.3" fill="#6b5535" opacity="0.78"/><rect x="29.7" y="42.4" width="1.3" height="1.3" fill="#6b5535" opacity="0.49"/><rect x="1.5" y="41.3" width="1.3" height="1.3" fill="#6b5535" opacity="0.67"/><rect x="32.2" y="39.2" width="1.3" height="1.3" fill="#6b5535" opacity="0.38"/><rect x="34.3" y="42.4" width="1.3" height="1.3" fill="#6b5535" opacity="0.54"/><rect x="25.8" y="38.9" width="1.3" height="1.3" fill="#6b5535" opacity="0.57"/><rect x="23.4" y="41.6" width="1.3" height="1.3" fill="#6b5535" opacity="0.38"/><rect x="4.8" y="41.7" width="1.3" height="1.3" fill="#6b5535" opacity="0.74"/><rect x="4.8" y="38.0" width="1.3" height="1.3" fill="#6b5535" opacity="0.34"/><rect x="27.5" y="40.3" width="1.3" height="1.3" fill="#6b5535" opacity="0.53"/><rect x="34.8" y="41.7" width="1.3" height="1.3" fill="#6b5535" opacity="0.43"/><rect x="24.5" y="38.0" width="1.3" height="1.3" fill="#6b5535" opacity="0.44"/><rect x="24.5" y="39.0" width="1.3" height="1.3" fill="#6b5535" opacity="0.32"/><rect x="18.1" y="40.0" width="1.3" height="1.3" fill="#6b5535" opacity="0.79"/></g></svg></div>
<div class="pname" style="position:absolute;left:80.5px;top:57.5px;font-weight:bold;color:#1659d2;font-size:12.7px">Boots_123</div>
<div style="position:absolute;left:81px;top:75px;color:#555;font-size:12px">颜色:紫色 尺寸:42</div>
<div class="cell" style="left:282px;width:112px">￥2.00</div>
<div class="cell" style="left:395px;width:191px">买家账号<span class="fc">:</span>11111@qq.com</div>
<div class="cell" style="left:587px;width:168px">未添加物流信息</div>
<div class="cell" style="left:756px;width:113px">已下单</div>
<div class="cell" style="left:870px;width:253px;padding-right:14px"><span class="lk">订单详情</span><span style="margin:0 9px">|</span><span class="lk">导出此订单</span><span style="margin:0 9px">|</span><span class="lk">打印订单</span></div>
</div>
<div class="ord" style="top:426px">
<div class="ohd">订单号:C20191114622226<span style="position:absolute;left:198.5px">下单时间<span class="fc">:</span>(GMT+8)2019-11-14 13:48:20</span></div>
<div class="vl" style="left:281px"></div><div class="vl" style="left:394px"></div><div class="vl" style="left:586px"></div><div class="vl" style="left:755px"></div><div class="vl" style="left:869px"></div>
<div style="position:absolute;left:21px;top:57px;width:35px;height:41px"><svg width="35" height="41" viewBox="0 0 35 41"><defs><clipPath id="cg1"><path d="M21.3,0.5 L29.2,0.9 L34.5,4.4 L32.7,8.8 L32.3,21.0 L33.6,31.6 L34.5,36.0 L31.9,38.6 L24.8,40.0 L10.8,40.4 L1.2,37.8 L0.3,34.2 L2.9,30.7 L10.8,26.4 L16.0,21.0 L19.6,15.0 L20.5,3.5 Z"/></clipPath></defs><path d="M21.3,0.5 L29.2,0.9 L34.5,4.4 L32.7,8.8 L32.3,21.0 L33.6,31.6 L34.5,36.0 L31.9,38.6 L24.8,40.0 L10.8,40.4 L1.2,37.8 L0.3,34.2 L2.9,30.7 L10.8,26.4 L16.0,21.0 L19.6,15.0 L20.5,3.5 Z" fill="#737f6f"/><g clip-path="url(#cg1)"><rect x="3.6" y="32.9" width="1.2" height="1.2" fill="#737f6f" opacity="0.31"/><rect x="18.7" y="38.4" width="1.2" height="1.2" fill="#9aa596" opacity="0.61"/><rect x="15.4" y="9.7" width="1.2" height="1.2" fill="#2c342b" opacity="0.47"/><rect x="8.0" y="17.1" width="1.2" height="1.2" fill="#2c342b" opacity="0.50"/><rect x="34.3" y="4.7" width="1.2" height="1.2" fill="#9aa596" opacity="0.45"/><rect x="0.9" y="1.1" width="1.2" height="1.2" fill="#9aa596" opacity="0.41"/><rect x="15.9" y="20.9" width="1.2" height="1.2" fill="#737f6f" opacity="0.63"/><rect x="25.7" y="21.4" width="1.2" height="1.2" fill="#737f6f" opacity="0.62"/><rect x="28.0" y="7.3" width="1.2" height="1.2" fill="#737f6f" opacity="0.55"/><rect x="3.5" y="38.0" width="1.2" height="1.2" fill="#9aa596" opacity="0.52"/><rect x="4.4" y="41.0" width="1.2" height="1.2" fill="#9aa596" opacity="0.41"/><rect x="18.4" y="12.1" width="1.2" height="1.2" fill="#2c342b" opacity="0.55"/><rect x="16.8" y="10.2" width="1.2" height="1.2" fill="#737f6f" opacity="0.31"/><rect x="0.8" y="25.5" width="1.2" height="1.2" fill="#2c342b" opacity="0.65"/><rect x="30.4" y="37.1" width="1.2" height="1.2" fill="#2c342b" opacity="0.47"/><rect x="10.4" y="33.5" width="1.2" height="1.2" fill="#737f6f" opacity="0.45"/><rect x="10.7" y="5.4" width="1.2" height="1.2" fill="#2c342b" opacity="0.50"/><rect x="22.7" y="4.7" width="1.2" height="1.2" fill="#9aa596" opacity="0.42"/><rect x="5.5" y="16.1" width="1.2" height="1.2" fill="#9aa596" opacity="0.62"/><rect x="2.9" y="27.6" width="1.2" height="1.2" fill="#2c342b" opacity="0.55"/><rect x="12.7" y="20.5" width="1.2" height="1.2" fill="#2c342b" opacity="0.51"/><rect x="24.9" y="23.0" width="1.2" height="1.2" fill="#737f6f" opacity="0.52"/><rect x="12.0" y="38.5" width="1.2" height="1.2" fill="#9aa596" opacity="0.45"/><rect x="25.8" y="10.6" width="1.2" height="1.2" fill="#737f6f" opacity="0.67"/><rect x="7.2" y="4.0" width="1.2" height="1.2" fill="#9aa596" opacity="0.67"/><rect x="33.5" y="19.5" width="1.2" height="1.2" fill="#9aa596" opacity="0.66"/><rect x="21.0" y="27.2" width="1.2" height="1.2" fill="#2c342b" opacity="0.61"/><rect x="8.5" y="7.4" width="1.2" height="1.2" fill="#2c342b" opacity="0.63"/><rect x="32.0" y="18.5" width="1.2" height="1.2" fill="#737f6f" opacity="0.74"/><rect x="19.8" y="13.9" width="1.2" height="1.2" fill="#737f6f" opacity="0.71"/><rect x="12.8" y="33.5" width="1.2" height="1.2" fill="#737f6f" opacity="0.48"/><rect x="25.4" y="11.2" width="1.2" height="1.2" fill="#9aa596" opacity="0.37"/><rect x="30.8" y="31.4" width="1.2" height="1.2" fill="#2c342b" opacity="0.62"/><rect x="25.5" y="4.3" width="1.2" height="1.2" fill="#737f6f" opacity="0.54"/><rect x="13.2" y="20.6" width="1.2" height="1.2" fill="#737f6f" opacity="0.61"/><rect x="16.6" y="2.4" width="1.2" height="1.2" fill="#9aa596" opacity="0.76"/><rect x="6.8" y="36.5" width="1.2" height="1.2" fill="#2c342b" opacity="0.79"/><rect x="4.8" y="31.8" width="1.2" height="1.2" fill="#2c342b" opacity="0.36"/><rect x="20.8" y="38.8" width="1.2" height="1.2" fill="#9aa596" opacity="0.57"/><rect x="4.5" y="17.3" width="1.2" height="1.2" fill="#9aa596" opacity="0.38"/><rect x="24.2" y="25.7" width="1.2" height="1.2" fill="#737f6f" opacity="0.46"/><rect x="15.5" y="38.1" width="1.2" height="1.2" fill="#9aa596" opacity="0.57"/><rect x="20.7" y="14.1" width="1.2" height="1.2" fill="#737f6f" opacity="0.41"/><rect x="4.2" y="8.1" width="1.2" height="1.2" fill="#9aa596" opacity="0.74"/><rect x="8.5" y="9.1" width="1.2" height="1.2" fill="#9aa596" opacity="0.41"/><rect x="31.5" y="13.7" width="1.2" height="1.2" fill="#9aa596" opacity="0.69"/><rect x="29.2" y="8.5" width="1.2" height="1.2" fill="#737f6f" opacity="0.30"/><rect x="22.6" y="33.5" width="1.2" height="1.2" fill="#9aa596" opacity="0.77"/><rect x="26.4" y="33.6" width="1.2" height="1.2" fill="#2c342b" opacity="0.70"/><rect x="12.0" y="11.9" width="1.2" height="1.2" fill="#9aa596" opacity="0.78"/><rect x="31.7" y="37.5" width="1.2" height="1.2" fill="#2c342b" opacity="0.53"/><rect x="8.8" y="21.9" width="1.2" height="1.2" fill="#737f6f" opacity="0.43"/><rect x="10.1" y="38.8" width="1.2" height="1.2" fill="#9aa596" opacity="0.53"/><rect x="7.1" y="14.3" width="1.2" height="1.2" fill="#2c342b" opacity="0.35"/><rect x="31.4" y="16.3" width="1.2" height="1.2" fill="#9aa596" opacity="0.70"/><rect x="27.3" y="9.8" width="1.2" height="1.2" fill="#2c342b" opacity="0.60"/><rect x="4.3" y="7.1" width="1.2" height="1.2" fill="#9aa596" opacity="0.47"/><rect x="5.9" y="13.4" width="1.2" height="1.2" fill="#2c342b" opacity="0.69"/><rect x="21.3" y="2.8" width="1.2" height="1.2" fill="#9aa596" opacity="0.58"/><rect x="0.7" y="18.1" width="1.2" height="1.2" fill="#737f6f" opacity="0.80"/><rect x="5.9" y="0.0" width="1.2" height="1.2" fill="#9aa596" opacity="0.48"/><rect x="29.9" y="11.4" width="1.2" height="1.2" fill="#9aa596" opacity="0.72"/><rect x="13.1" y="14.8" width="1.2" height="1.2" fill="#9aa596" opacity="0.67"/><rect x="32.7" y="13.5" width="1.2" height="1.2" fill="#737f6f" opacity="0.57"/><rect x="0.4" y="3.0" width="1.2" height="1.2" fill="#9aa596" opacity="0.39"/><rect x="34.3" y="4.7" width="1.2" height="1.2" fill="#9aa596" opacity="0.39"/><rect x="27.8" y="10.7" width="1.2" height="1.2" fill="#2c342b" opacity="0.48"/><rect x="0.2" y="9.1" width="1.2" height="1.2" fill="#9aa596" opacity="0.74"/><rect x="34.3" y="2.2" width="1.2" height="1.2" fill="#737f6f" opacity="0.38"/><rect x="22.4" y="20.6" width="1.2" height="1.2" fill="#9aa596" opacity="0.67"/><rect x="27.9" y="41.0" width="1.2" height="1.2" fill="#737f6f" opacity="0.74"/><rect x="19.2" y="3.3" width="1.2" height="1.2" fill="#2c342b" opacity="0.63"/><rect x="7.1" y="4.3" width="1.2" height="1.2" fill="#2c342b" opacity="0.63"/><rect x="1.0" y="8.6" width="1.2" height="1.2" fill="#737f6f" opacity="0.32"/><rect x="17.9" y="38.4" width="1.2" height="1.2" fill="#9aa596" opacity="0.46"/><rect x="15.6" y="40.2" width="1.2" height="1.2" fill="#9aa596" opacity="0.68"/><rect x="24.4" y="0.6" width="1.2" height="1.2" fill="#9aa596" opacity="0.65"/><rect x="22.6" y="0.6" width="1.2" height="1.2" fill="#737f6f" opacity="0.36"/><rect x="29.6" y="18.3" width="1.2" height="1.2" fill="#737f6f" opacity="0.63"/><rect x="4.8" y="29.9" width="1.2" height="1.2" fill="#9aa596" opacity="0.73"/><rect x="9.8" y="9.6" width="1.2" height="1.2" fill="#9aa596" opacity="0.57"/><rect x="11.7" y="33.1" width="1.2" height="1.2" fill="#9aa596" opacity="0.56"/><rect x="24.4" y="13.0" width="1.2" height="1.2" fill="#9aa596" opacity="0.47"/><rect x="26.3" y="7.0" width="1.2" height="1.2" fill="#9aa596" opacity="0.34"/><rect x="32.5" y="29.9" width="1.2" height="1.2" fill="#737f6f" opacity="0.50"/><rect x="33.6" y="17.7" width="1.2" height="1.2" fill="#9aa596" opacity="0.76"/><rect x="21.9" y="0.3" width="1.2" height="1.2" fill="#9aa596" opacity="0.52"/><rect x="1.9" y="26.3" width="1.2" height="1.2" fill="#9aa596" opacity="0.61"/><rect x="17.3" y="21.4" width="1.2" height="1.2" fill="#737f6f" opacity="0.69"/><rect x="26.0" y="34.7" width="1.2" height="1.2" fill="#9aa596" opacity="0.34"/><rect x="24.2" y="33.3" width="1.2" height="1.2" fill="#737f6f" opacity="0.50"/><rect x="5.8" y="35.0" width="1.2" height="1.2" fill="#9aa596" opacity="0.78"/><rect x="31.8" y="10.7" width="1.2" height="1.2" fill="#9aa596" opacity="0.77"/><rect x="21.9" y="9.7" width="1.2" height="1.2" fill="#2c342b" opacity="0.44"/><rect x="23.1" y="33.3" width="1.2" height="1.2" fill="#2c342b" opacity="0.30"/><rect x="15.4" y="20.0" width="1.2" height="1.2" fill="#2c342b" opacity="0.76"/><rect x="22.3" y="32.1" width="1.2" height="1.2" fill="#9aa596" opacity="0.61"/><rect x="20.5" y="20.4" width="1.2" height="1.2" fill="#737f6f" opacity="0.47"/><rect x="2.3" y="22.7" width="1.2" height="1.2" fill="#9aa596" opacity="0.74"/><rect x="2.6" y="33.7" width="1.2" height="1.2" fill="#9aa596" opacity="0.32"/><rect x="5.5" y="3.9" width="1.2" height="1.2" fill="#9aa596" opacity="0.59"/><rect x="8.3" y="29.1" width="1.2" height="1.2" fill="#2c342b" opacity="0.31"/><rect x="19.1" y="27.8" width="1.2" height="1.2" fill="#9aa596" opacity="0.37"/><rect x="10.0" y="10.2" width="1.2" height="1.2" fill="#9aa596" opacity="0.59"/><rect x="5.2" y="17.6" width="1.2" height="1.2" fill="#737f6f" opacity="0.33"/><rect x="32.2" y="34.5" width="1.2" height="1.2" fill="#2c342b" opacity="0.79"/><rect x="9.3" y="12.5" width="1.2" height="1.2" fill="#2c342b" opacity="0.30"/><rect x="33.7" y="32.7" width="1.2" height="1.2" fill="#737f6f" opacity="0.67"/><rect x="13.9" y="36.0" width="1.2" height="1.2" fill="#9aa596" opacity="0.64"/><rect x="29.6" y="1.7" width="1.2" height="1.2" fill="#9aa596" opacity="0.77"/><rect x="6.4" y="37.2" width="1.2" height="1.2" fill="#9aa596" opacity="0.74"/><rect x="25.9" y="38.1" width="1.2" height="1.2" fill="#9aa596" opacity="0.78"/><rect x="8.1" y="39.0" width="1.2" height="1.2" fill="#737f6f" opacity="0.48"/><rect x="12.4" y="25.2" width="1.2" height="1.2" fill="#9aa596" opacity="0.48"/><rect x="25.8" y="10.0" width="1.2" height="1.2" fill="#9aa596" opacity="0.54"/><rect x="6.8" y="23.4" width="1.2" height="1.2" fill="#737f6f" opacity="0.79"/><rect x="26.6" y="21.7" width="1.2" height="1.2" fill="#737f6f" opacity="0.74"/><rect x="5.8" y="33.9" width="1.2" height="1.2" fill="#9aa596" opacity="0.80"/><rect x="26.6" y="16.1" width="1.2" height="1.2" fill="#9aa596" opacity="0.49"/><rect x="3.7" y="35.8" width="1.2" height="1.2" fill="#9aa596" opacity="0.71"/><rect x="12.5" y="12.4" width="1.2" height="1.2" fill="#737f6f" opacity="0.62"/><rect x="27.1" y="6.3" width="1.2" height="1.2" fill="#9aa596" opacity="0.56"/><rect x="10.0" y="40.2" width="1.2" height="1.2" fill="#9aa596" opacity="0.66"/><rect x="6.8" y="28.5" width="1.2" height="1.2" fill="#737f6f" opacity="0.63"/><rect x="7.5" y="29.5" width="1.2" height="1.2" fill="#9aa596" opacity="0.49"/><rect x="20.6" y="18.4" width="1.2" height="1.2" fill="#2c342b" opacity="0.79"/><rect x="3.9" y="23.4" width="1.2" height="1.2" fill="#2c342b" opacity="0.63"/><rect x="20.3" y="35.0" width="1.2" height="1.2" fill="#2c342b" opacity="0.78"/><rect x="29.0" y="22.4" width="1.2" height="1.2" fill="#9aa596" opacity="0.46"/><rect x="12.5" y="30.5" width="1.2" height="1.2" fill="#9aa596" opacity="0.43"/><rect x="32.6" y="33.0" width="1.2" height="1.2" fill="#737f6f" opacity="0.68"/><rect x="23.5" y="10.7" width="1.2" height="1.2" fill="#9aa596" opacity="0.38"/><rect x="30.0" y="31.3" width="1.2" height="1.2" fill="#737f6f" opacity="0.34"/><rect x="28.7" y="0.5" width="1.2" height="1.2" fill="#737f6f" opacity="0.74"/><rect x="19.5" y="17.7" width="1.2" height="1.2" fill="#2c342b" opacity="0.61"/><rect x="11.0" y="33.4" width="1.2" height="1.2" fill="#9aa596" opacity="0.62"/><rect x="20.5" y="35.1" width="1.2" height="1.2" fill="#737f6f" opacity="0.79"/><rect x="2.5" y="10.4" width="1.2" height="1.2" fill="#2c342b" opacity="0.43"/><rect x="2.4" y="9.6" width="1.2" height="1.2" fill="#9aa596" opacity="0.44"/><rect x="22.4" y="10.2" width="1.2" height="1.2" fill="#9aa596" opacity="0.73"/><rect x="1.7" y="3.1" width="1.2" height="1.2" fill="#2c342b" opacity="0.37"/><rect x="21.9" y="26.8" width="1.2" height="1.2" fill="#2c342b" opacity="0.40"/><rect x="5.9" y="31.4" width="1.2" height="1.2" fill="#9aa596" opacity="0.50"/><rect x="17.6" y="1.0" width="1.2" height="1.2" fill="#2c342b" opacity="0.71"/><rect x="7.3" y="32.2" width="1.2" height="1.2" fill="#737f6f" opacity="0.69"/><rect x="3.8" y="3.6" width="1.2" height="1.2" fill="#2c342b" opacity="0.58"/><rect x="10.6" y="34.1" width="1.2" height="1.2" fill="#9aa596" opacity="0.39"/><rect x="6.4" y="28.3" width="1.2" height="1.2" fill="#2c342b" opacity="0.74"/><rect x="17.5" y="6.3" width="1.2" height="1.2" fill="#9aa596" opacity="0.41"/><rect x="17.0" y="16.6" width="1.2" height="1.2" fill="#2c342b" opacity="0.74"/><rect x="8.1" y="12.3" width="1.2" height="1.2" fill="#9aa596" opacity="0.74"/><rect x="22.4" y="6.5" width="1.2" height="1.2" fill="#2c342b" opacity="0.52"/><rect x="26.9" y="9.7" width="1.2" height="1.2" fill="#2c342b" opacity="0.73"/><rect x="29.3" y="22.8" width="1.2" height="1.2" fill="#9aa596" opacity="0.65"/><rect x="19.5" y="17.5" width="1.2" height="1.2" fill="#2c342b" opacity="0.45"/><rect x="15.3" y="20.6" width="1.2" height="1.2" fill="#9aa596" opacity="0.36"/><rect x="34.0" y="23.6" width="1.2" height="1.2" fill="#9aa596" opacity="0.41"/><rect x="31.0" y="39.3" width="1.2" height="1.2" fill="#9aa596" opacity="0.35"/><rect x="16.4" y="35.4" width="1.2" height="1.2" fill="#737f6f" opacity="0.31"/><rect x="13.5" y="34.1" width="1.2" height="1.2" fill="#737f6f" opacity="0.73"/><rect x="5.8" y="3.1" width="1.2" height="1.2" fill="#737f6f" opacity="0.31"/><rect x="33.9" y="9.7" width="1.2" height="1.2" fill="#9aa596" opacity="0.54"/><rect x="24.5" y="12.0" width="1.2" height="1.2" fill="#2c342b" opacity="0.70"/><rect x="12.6" y="23.5" width="1.2" height="1.2" fill="#2c342b" opacity="0.77"/><rect x="11.1" y="2.8" width="1.2" height="1.2" fill="#9aa596" opacity="0.36"/><rect x="30.2" y="28.2" width="1.2" height="1.2" fill="#737f6f" opacity="0.62"/><rect x="29.9" y="33.7" width="1.2" height="1.2" fill="#737f6f" opacity="0.33"/><rect x="12.0" y="34.6" width="1.2" height="1.2" fill="#9aa596" opacity="0.40"/><rect x="25.9" y="13.1" width="1.2" height="1.2" fill="#9aa596" opacity="0.57"/><rect x="22.0" y="6.4" width="1.2" height="1.2" fill="#9aa596" opacity="0.34"/><rect x="20.5" y="20.1" width="1.2" height="1.2" fill="#2c342b" opacity="0.49"/><rect x="33.7" y="25.2" width="1.2" height="1.2" fill="#9aa596" opacity="0.64"/><rect x="6.8" y="21.2" width="1.2" height="1.2" fill="#737f6f" opacity="0.53"/><rect x="23.1" y="37.3" width="1.2" height="1.2" fill="#9aa596" opacity="0.38"/><rect x="24.0" y="27.1" width="1.2" height="1.2" fill="#2c342b" opacity="0.42"/><rect x="17.7" y="18.6" width="1.2" height="1.2" fill="#737f6f" opacity="0.60"/><rect x="13.9" y="18.0" width="1.2" height="1.2" fill="#9aa596" opacity="0.79"/><rect x="18.7" y="32.4" width="1.2" height="1.2" fill="#9aa596" opacity="0.34"/><rect x="28.8" y="25.3" width="1.2" height="1.2" fill="#9aa596" opacity="0.74"/><rect x="2.8" y="39.6" width="1.2" height="1.2" fill="#737f6f" opacity="0.43"/><rect x="16.3" y="4.0" width="1.2" height="1.2" fill="#9aa596" opacity="0.53"/><rect x="19.9" y="25.0" width="1.2" height="1.2" fill="#737f6f" opacity="0.38"/><rect x="3.8" y="15.6" width="1.2" height="1.2" fill="#737f6f" opacity="0.41"/><rect x="15.3" y="0.8" width="1.2" height="1.2" fill="#9aa596" opacity="0.64"/><rect x="10.2" y="5.6" width="1.2" height="1.2" fill="#9aa596" opacity="0.66"/><rect x="1.5" y="16.9" width="1.2" height="1.2" fill="#737f6f" opacity="0.61"/><rect x="13.1" y="38.1" width="1.2" height="1.2" fill="#2c342b" opacity="0.38"/><rect x="0.2" y="39.4" width="1.2" height="1.2" fill="#737f6f" opacity="0.53"/><rect x="8.6" y="34.3" width="1.2" height="1.2" fill="#9aa596" opacity="0.62"/><rect x="4.0" y="23.4" width="1.2" height="1.2" fill="#9aa596" opacity="0.61"/><rect x="10.8" y="26.3" width="1.2" height="1.2" fill="#9aa596" opacity="0.55"/><rect x="26.3" y="8.4" width="1.2" height="1.2" fill="#2c342b" opacity="0.74"/><rect x="33.0" y="0.3" width="1.2" height="1.2" fill="#9aa596" opacity="0.71"/><rect x="20.3" y="2.9" width="1.2" height="1.2" fill="#737f6f" opacity="0.30"/><rect x="29.7" y="12.4" width="1.2" height="1.2" fill="#9aa596" opacity="0.63"/><rect x="8.7" y="17.8" width="1.2" height="1.2" fill="#2c342b" opacity="0.33"/><rect x="30.3" y="10.1" width="1.2" height="1.2" fill="#2c342b" opacity="0.42"/><rect x="11.3" y="18.3" width="1.2" height="1.2" fill="#2c342b" opacity="0.51"/><rect x="33.1" y="14.0" width="1.2" height="1.2" fill="#737f6f" opacity="0.63"/><rect x="24.6" y="15.6" width="1.2" height="1.2" fill="#9aa596" opacity="0.39"/><rect x="33.2" y="14.7" width="1.2" height="1.2" fill="#9aa596" opacity="0.75"/><rect x="31.8" y="7.3" width="1.2" height="1.2" fill="#2c342b" opacity="0.47"/><rect x="6.2" y="9.3" width="1.2" height="1.2" fill="#9aa596" opacity="0.53"/><rect x="10.7" y="19.0" width="1.2" height="1.2" fill="#9aa596" opacity="0.55"/><rect x="13.9" y="7.9" width="1.2" height="1.2" fill="#2c342b" opacity="0.75"/><rect x="19.7" y="10.3" width="1.2" height="1.2" fill="#9aa596" opacity="0.39"/><rect x="34.1" y="30.1" width="1.2" height="1.2" fill="#2c342b" opacity="0.65"/><rect x="30.2" y="8.1" width="1.2" height="1.2" fill="#9aa596" opacity="0.70"/><rect x="26.5" y="3.1" width="1.2" height="1.2" fill="#9aa596" opacity="0.50"/><rect x="0.4" y="32.4" width="1.2" height="1.2" fill="#9aa596" opacity="0.32"/><rect x="15.9" y="37.0" width="1.2" height="1.2" fill="#9aa596" opacity="0.57"/><rect x="11.8" y="23.6" width="1.2" height="1.2" fill="#2c342b" opacity="0.73"/><rect x="24.7" y="8.0" width="1.2" height="1.2" fill="#9aa596" opacity="0.59"/><rect x="16.9" y="23.2" width="1.2" height="1.2" fill="#9aa596" opacity="0.66"/><rect x="24.2" y="39.7" width="1.2" height="1.2" fill="#2c342b" opacity="0.54"/><rect x="4.1" y="20.4" width="1.2" height="1.2" fill="#9aa596" opacity="0.47"/><rect x="5.2" y="13.6" width="1.2" height="1.2" fill="#9aa596" opacity="0.30"/><rect x="8.2" y="15.2" width="1.2" height="1.2" fill="#9aa596" opacity="0.39"/><rect x="15.5" y="5.3" width="1.2" height="1.2" fill="#9aa596" opacity="0.46"/><rect x="34.5" y="24.4" width="1.2" height="1.2" fill="#9aa596" opacity="0.65"/><rect x="30.7" y="17.4" width="1.2" height="1.2" fill="#2c342b" opacity="0.70"/><rect x="8.2" y="40.2" width="1.2" height="1.2" fill="#2c342b" opacity="0.43"/><rect x="34.9" y="4.4" width="1.2" height="1.2" fill="#9aa596" opacity="0.56"/><rect x="17.1" y="10.6" width="1.2" height="1.2" fill="#9aa596" opacity="0.44"/><rect x="10.0" y="32.7" width="1.2" height="1.2" fill="#2c342b" opacity="0.75"/><rect x="4.2" y="17.5" width="1.2" height="1.2" fill="#9aa596" opacity="0.66"/><rect x="5.6" y="20.7" width="1.2" height="1.2" fill="#9aa596" opacity="0.44"/><rect x="21.8" y="28.7" width="1.2" height="1.2" fill="#2c342b" opacity="0.50"/><rect x="0.4" y="34.1" width="1.2" height="1.2" fill="#9aa596" opacity="0.44"/><rect x="33.3" y="6.4" width="1.2" height="1.2" fill="#9aa596" opacity="0.31"/><rect x="25.9" y="7.1" width="1.2" height="1.2" fill="#9aa596" opacity="0.60"/><rect x="2.6" y="0.4" width="1.2" height="1.2" fill="#737f6f" opacity="0.78"/><rect x="33.8" y="31.4" width="1.2" height="1.2" fill="#9aa596" opacity="0.35"/><rect x="26.9" y="26.2" width="1.2" height="1.2" fill="#9aa596" opacity="0.31"/><rect x="20.5" y="23.0" width="1.2" height="1.2" fill="#737f6f" opacity="0.60"/><rect x="22.6" y="26.2" width="1.2" height="1.2" fill="#2c342b" opacity="0.67"/><rect x="17.4" y="28.0" width="1.2" height="1.2" fill="#9aa596" opacity="0.78"/><rect x="26.5" y="14.4" width="1.2" height="1.2" fill="#2c342b" opacity="0.43"/><rect x="18.6" y="12.8" width="1.2" height="1.2" fill="#2c342b" opacity="0.31"/><rect x="19.2" y="5.9" width="1.2" height="1.2" fill="#2c342b" opacity="0.45"/><rect x="28.9" y="18.4" width="1.2" height="1.2" fill="#2c342b" opacity="0.56"/><rect x="10.4" y="14.7" width="1.2" height="1.2" fill="#9aa596" opacity="0.75"/><rect x="32.9" y="26.7" width="1.2" height="1.2" fill="#9aa596" opacity="0.74"/><rect x="16.7" y="22.8" width="1.2" height="1.2" fill="#2c342b" opacity="0.62"/><rect x="0.8" y="20.1" width="1.2" height="1.2" fill="#737f6f" opacity="0.44"/><rect x="20.4" y="29.5" width="1.2" height="1.2" fill="#737f6f" opacity="0.44"/><rect x="15.9" y="26.0" width="1.2" height="1.2" fill="#2c342b" opacity="0.72"/><rect x="14.8" y="4.1" width="1.2" height="1.2" fill="#9aa596" opacity="0.38"/><rect x="11.0" y="2.6" width="1.2" height="1.2" fill="#9aa596" opacity="0.55"/><rect x="26.8" y="10.6" width="1.2" height="1.2" fill="#9aa596" opacity="0.65"/><rect x="0.2" y="0.8" width="1.2" height="1.2" fill="#737f6f" opacity="0.34"/><rect x="20.7" y="12.6" width="1.2" height="1.2" fill="#737f6f" opacity="0.77"/><rect x="4.6" y="28.5" width="1.2" height="1.2" fill="#9aa596" opacity="0.71"/><rect x="6.1" y="5.3" width="1.2" height="1.2" fill="#9aa596" opacity="0.58"/><rect x="23.7" y="26.8" width="1.2" height="1.2" fill="#737f6f" opacity="0.45"/><rect x="7.3" y="22.4" width="1.2" height="1.2" fill="#9aa596" opacity="0.48"/><rect x="30.1" y="34.8" width="1.2" height="1.2" fill="#9aa596" opacity="0.49"/><rect x="12.7" y="11.8" width="1.2" height="1.2" fill="#9aa596" opacity="0.67"/><rect x="14.7" y="14.8" width="1.2" height="1.2" fill="#737f6f" opacity="0.35"/><rect x="30.6" y="17.6" width="1.2" height="1.2" fill="#737f6f" opacity="0.53"/><rect x="17.2" y="24.0" width="1.5" height="1.3" fill="#2c342b" opacity="0.66"/><rect x="15.0" y="26.0" width="1.5" height="1.3" fill="#2c342b" opacity="0.84"/><rect x="24.5" y="5.3" width="1.5" height="1.3" fill="#2c342b" opacity="0.52"/><rect x="21.4" y="2.3" width="1.5" height="1.3" fill="#2c342b" opacity="0.70"/><rect x="24.6" y="13.5" width="1.5" height="1.3" fill="#2c342b" opacity="0.83"/><rect x="24.2" y="1.1" width="1.5" height="1.3" fill="#2c342b" opacity="0.89"/><rect x="22.9" y="6.5" width="1.5" height="1.3" fill="#2c342b" opacity="0.70"/><rect x="16.4" y="25.8" width="1.5" height="1.3" fill="#2c342b" opacity="0.60"/><rect x="17.1" y="22.7" width="1.5" height="1.3" fill="#2c342b" opacity="0.66"/><rect x="18.5" y="22.8" width="1.5" height="1.3" fill="#2c342b" opacity="0.72"/><rect x="21.5" y="19.4" width="1.5" height="1.3" fill="#2c342b" opacity="0.73"/><rect x="16.3" y="22.3" width="1.5" height="1.3" fill="#2c342b" opacity="0.95"/><rect x="23.6" y="2.8" width="1.5" height="1.3" fill="#2c342b" opacity="0.83"/><rect x="23.3" y="13.3" width="1.5" height="1.3" fill="#2c342b" opacity="0.56"/><rect x="19.8" y="23.2" width="1.5" height="1.3" fill="#2c342b" opacity="0.69"/><rect x="22.3" y="11.2" width="1.5" height="1.3" fill="#2c342b" opacity="0.61"/><rect x="24.4" y="14.1" width="1.5" height="1.3" fill="#2c342b" opacity="0.53"/><rect x="21.9" y="7.5" width="1.5" height="1.3" fill="#2c342b" opacity="0.51"/><rect x="24.1" y="13.0" width="1.5" height="1.3" fill="#2c342b" opacity="0.93"/><rect x="20.8" y="19.1" width="1.5" height="1.3" fill="#2c342b" opacity="0.52"/><rect x="22.5" y="4.0" width="1.5" height="1.3" fill="#2c342b" opacity="0.71"/><rect x="19.4" y="18.0" width="1.5" height="1.3" fill="#2c342b" opacity="0.77"/><rect x="23.0" y="4.3" width="1.5" height="1.3" fill="#2c342b" opacity="0.78"/><rect x="24.7" y="10.7" width="1.5" height="1.3" fill="#2c342b" opacity="0.81"/><rect x="23.2" y="16.1" width="1.5" height="1.3" fill="#2c342b" opacity="0.82"/><rect x="19.0" y="24.5" width="1.5" height="1.3" fill="#2c342b" opacity="0.71"/><rect x="20.8" y="16.0" width="1.5" height="1.3" fill="#2c342b" opacity="0.74"/><rect x="20.4" y="13.0" width="1.5" height="1.3" fill="#2c342b" opacity="0.94"/><rect x="21.6" y="9.4" width="1.5" height="1.3" fill="#2c342b" opacity="0.89"/><rect x="23.0" y="9.5" width="1.5" height="1.3" fill="#2c342b" opacity="0.56"/><rect x="23.0" y="10.9" width="1.5" height="1.3" fill="#2c342b" opacity="0.88"/><rect x="19.8" y="15.3" width="1.5" height="1.3" fill="#2c342b" opacity="0.73"/><rect x="16.1" y="23.0" width="1.5" height="1.3" fill="#2c342b" opacity="0.87"/><rect x="22.8" y="3.3" width="1.5" height="1.3" fill="#2c342b" opacity="0.66"/><rect x="23.7" y="6.6" width="1.5" height="1.3" fill="#2c342b" opacity="0.85"/><rect x="20.8" y="6.1" width="1.5" height="1.3" fill="#2c342b" opacity="0.93"/><rect x="18.5" y="21.6" width="1.5" height="1.3" fill="#2c342b" opacity="0.83"/><rect x="20.7" y="16.2" width="1.5" height="1.3" fill="#2c342b" opacity="0.77"/><rect x="12.6" y="26.8" width="1.5" height="1.3" fill="#2c342b" opacity="0.81"/><rect x="21.4" y="16.0" width="1.5" height="1.3" fill="#2c342b" opacity="0.69"/><rect x="20.0" y="17.2" width="1.5" height="1.3" fill="#2c342b" opacity="0.83"/><rect x="19.3" y="24.1" width="1.5" height="1.3" fill="#2c342b" opacity="0.76"/><rect x="24.8" y="3.0" width="1.5" height="1.3" fill="#2c342b" opacity="0.68"/><rect x="21.1" y="6.3" width="1.5" height="1.3" fill="#2c342b" opacity="0.71"/><rect x="17.7" y="21.5" width="1.5" height="1.3" fill="#2c342b" opacity="0.67"/><rect x="18.9" y="23.6" width="1.5" height="1.3" fill="#2c342b" opacity="0.65"/><rect x="22.6" y="3.9" width="1.5" height="1.3" fill="#2c342b" opacity="0.71"/><rect x="21.6" y="8.2" width="1.5" height="1.3" fill="#2c342b" opacity="0.66"/><rect x="24.9" y="12.5" width="1.5" height="1.3" fill="#2c342b" opacity="0.80"/><rect x="16.8" y="25.5" width="1.5" height="1.3" fill="#2c342b" opacity="0.93"/><rect x="21.3" y="11.1" width="1.5" height="1.3" fill="#2c342b" opacity="0.84"/><rect x="23.5" y="11.7" width="1.5" height="1.3" fill="#2c342b" opacity="0.91"/><rect x="22.2" y="1.5" width="1.5" height="1.3" fill="#2c342b" opacity="0.75"/><rect x="20.6" y="3.7" width="1.5" height="1.3" fill="#2c342b" opacity="0.88"/><rect x="21.1" y="14.2" width="1.5" height="1.3" fill="#2c342b" opacity="0.77"/><rect x="18.0" y="22.9" width="1.5" height="1.3" fill="#2c342b" opacity="0.54"/><rect x="24.0" y="13.9" width="1.5" height="1.3" fill="#2c342b" opacity="0.72"/><rect x="21.2" y="21.2" width="1.5" height="1.3" fill="#2c342b" opacity="0.73"/><rect x="21.7" y="17.5" width="1.5" height="1.3" fill="#2c342b" opacity="0.72"/><rect x="13.9" y="24.4" width="1.5" height="1.3" fill="#2c342b" opacity="0.90"/><rect x="24.7" y="7.5" width="1.5" height="1.3" fill="#2c342b" opacity="0.66"/><rect x="20.1" y="17.9" width="1.5" height="1.3" fill="#2c342b" opacity="0.76"/><rect x="21.4" y="9.5" width="1.5" height="1.3" fill="#2c342b" opacity="0.67"/><rect x="20.8" y="6.3" width="1.5" height="1.3" fill="#2c342b" opacity="0.50"/><rect x="24.1" y="12.1" width="1.5" height="1.3" fill="#2c342b" opacity="0.88"/><rect x="20.0" y="17.4" width="1.5" height="1.3" fill="#2c342b" opacity="0.86"/><rect x="24.0" y="7.1" width="1.5" height="1.3" fill="#2c342b" opacity="0.68"/><rect x="21.3" y="2.0" width="1.5" height="1.3" fill="#2c342b" opacity="0.81"/><rect x="23.5" y="7.5" width="1.5" height="1.3" fill="#2c342b" opacity="0.78"/><rect x="21.7" y="2.2" width="1.5" height="1.3" fill="#2c342b" opacity="0.76"/><rect x="0" y="35" width="35" height="6" fill="#3d473b" opacity="0.55"/><rect x="31.5" y="35.5" width="1.3" height="1.3" fill="#2c342b" opacity="0.60"/><rect x="26.0" y="36.3" width="1.3" height="1.3" fill="#2c342b" opacity="0.78"/><rect x="30.9" y="35.6" width="1.3" height="1.3" fill="#2c342b" opacity="0.75"/><rect x="9.4" y="39.5" width="1.3" height="1.3" fill="#2c342b" opacity="0.72"/><rect x="1.4" y="36.3" width="1.3" height="1.3" fill="#2c342b" opacity="0.60"/><rect x="13.9" y="41.0" width="1.3" height="1.3" fill="#2c342b" opacity="0.62"/><rect x="1.1" y="37.6" width="1.3" height="1.3" fill="#2c342b" opacity="0.44"/><rect x="7.9" y="38.8" width="1.3" height="1.3" fill="#2c342b" opacity="0.77"/><rect x="23.3" y="40.0" width="1.3" height="1.3" fill="#2c342b" opacity="0.64"/><rect x="16.0" y="39.4" width="1.3" height="1.3" fill="#2c342b" opacity="0.71"/><rect x="30.2" y="37.2" width="1.3" height="1.3" fill="#2c342b" opacity="0.50"/><rect x="13.7" y="37.4" width="1.3" height="1.3" fill="#2c342b" opacity="0.58"/><rect x="3.4" y="38.4" width="1.3" height="1.3" fill="#2c342b" opacity="0.78"/><rect x="0.8" y="39.9" width="1.3" height="1.3" fill="#2c342b" opacity="0.40"/><rect x="3.0" y="40.5" width="1.3" height="1.3" fill="#2c342b" opacity="0.78"/><rect x="4.9" y="37.9" width="1.3" height="1.3" fill="#2c342b" opacity="0.79"/><rect x="20.6" y="38.7" width="1.3" height="1.3" fill="#2c342b" opacity="0.36"/><rect x="22.7" y="36.0" width="1.3" height="1.3" fill="#2c342b" opacity="0.71"/><rect x="21.5" y="40.0" width="1.3" height="1.3" fill="#2c342b" opacity="0.31"/><rect x="10.3" y="40.3" width="1.3" height="1.3" fill="#2c342b" opacity="0.57"/><rect x="13.8" y="35.1" width="1.3" height="1.3" fill="#2c342b" opacity="0.67"/><rect x="9.1" y="35.5" width="1.3" height="1.3" fill="#2c342b" opacity="0.80"/><rect x="10.4" y="37.0" width="1.3" height="1.3" fill="#2c342b" opacity="0.55"/><rect x="18.5" y="39.4" width="1.3" height="1.3" fill="#2c342b" opacity="0.36"/><rect x="8.0" y="39.4" width="1.3" height="1.3" fill="#2c342b" opacity="0.56"/><rect x="7.2" y="40.4" width="1.3" height="1.3" fill="#2c342b" opacity="0.60"/><rect x="32.3" y="36.3" width="1.3" height="1.3" fill="#2c342b" opacity="0.42"/><rect x="21.7" y="36.1" width="1.3" height="1.3" fill="#2c342b" opacity="0.72"/><rect x="5.9" y="35.4" width="1.3" height="1.3" fill="#2c342b" opacity="0.44"/><rect x="33.6" y="37.7" width="1.3" height="1.3" fill="#2c342b" opacity="0.77"/><rect x="34.5" y="36.1" width="1.3" height="1.3" fill="#2c342b" opacity="0.66"/><rect x="32.9" y="38.7" width="1.3" height="1.3" fill="#2c342b" opacity="0.58"/><rect x="11.8" y="40.1" width="1.3" height="1.3" fill="#2c342b" opacity="0.61"/><rect x="13.2" y="35.2" width="1.3" height="1.3" fill="#2c342b" opacity="0.64"/><rect x="0.8" y="39.0" width="1.3" height="1.3" fill="#2c342b" opacity="0.50"/><rect x="28.4" y="35.5" width="1.3" height="1.3" fill="#2c342b" opacity="0.38"/><rect x="5.0" y="37.2" width="1.3" height="1.3" fill="#2c342b" opacity="0.34"/><rect x="32.9" y="36.1" width="1.3" height="1.3" fill="#2c342b" opacity="0.42"/><rect x="34.7" y="35.6" width="1.3" height="1.3" fill="#2c342b" opacity="0.72"/><rect x="1.4" y="36.2" width="1.3" height="1.3" fill="#2c342b" opacity="0.79"/></g></svg></div>
<div class="pname" style="position:absolute;left:80.5px;top:57.5px;font-weight:bold;color:#1659d2;font-size:12.7px">Boots_PNG7799</div>
<div style="position:absolute;left:81px;top:75px;color:#555;font-size:12px"></div>
<div class="cell" style="left:282px;width:112px">￥432.00</div>
<div class="cell" style="left:395px;width:191px">买家账号<span class="fc">:</span>11111@qq.com</div>
<div class="cell" style="left:587px;width:168px">未添加物流信息</div>
<div class="cell" style="left:756px;width:113px">已下单</div>
<div class="cell" style="left:870px;width:253px;padding-right:14px"><span class="lk">订单详情</span><span style="margin:0 9px">|</span><span class="lk">导出此订单</span><span style="margin:0 9px">|</span><span class="lk">打印订单</span></div>
</div>
<div class="ord" style="top:558px">
<div class="ohd">订单号:C20191114620226<span style="position:absolute;left:198.5px">下单时间<span class="fc">:</span>(GMT+8)2019-11-14 13:19:59</span></div>
<div class="vl" style="left:281px"></div><div class="vl" style="left:394px"></div><div class="vl" style="left:586px"></div><div class="vl" style="left:755px"></div><div class="vl" style="left:869px"></div>
<div style="position:absolute;left:21px;top:57px;width:35px;height:41px"><svg width="35" height="41" viewBox="0 0 35 41"><defs><clipPath id="cg2"><path d="M21.3,0.5 L29.2,0.9 L34.5,4.4 L32.7,8.8 L32.3,21.0 L33.6,31.6 L34.5,36.0 L31.9,38.6 L24.8,40.0 L10.8,40.4 L1.2,37.8 L0.3,34.2 L2.9,30.7 L10.8,26.4 L16.0,21.0 L19.6,15.0 L20.5,3.5 Z"/></clipPath></defs><path d="M21.3,0.5 L29.2,0.9 L34.5,4.4 L32.7,8.8 L32.3,21.0 L33.6,31.6 L34.5,36.0 L31.9,38.6 L24.8,40.0 L10.8,40.4 L1.2,37.8 L0.3,34.2 L2.9,30.7 L10.8,26.4 L16.0,21.0 L19.6,15.0 L20.5,3.5 Z" fill="#737f6f"/><g clip-path="url(#cg2)"><rect x="15.5" y="29.1" width="1.2" height="1.2" fill="#9aa596" opacity="0.58"/><rect x="25.9" y="28.3" width="1.2" height="1.2" fill="#9aa596" opacity="0.63"/><rect x="25.0" y="18.8" width="1.2" height="1.2" fill="#9aa596" opacity="0.46"/><rect x="19.3" y="23.3" width="1.2" height="1.2" fill="#737f6f" opacity="0.39"/><rect x="23.4" y="4.8" width="1.2" height="1.2" fill="#737f6f" opacity="0.45"/><rect x="5.6" y="30.8" width="1.2" height="1.2" fill="#9aa596" opacity="0.41"/><rect x="31.9" y="19.4" width="1.2" height="1.2" fill="#9aa596" opacity="0.32"/><rect x="30.1" y="9.4" width="1.2" height="1.2" fill="#9aa596" opacity="0.46"/><rect x="10.3" y="1.1" width="1.2" height="1.2" fill="#9aa596" opacity="0.44"/><rect x="18.7" y="14.8" width="1.2" height="1.2" fill="#737f6f" opacity="0.49"/><rect x="23.9" y="30.0" width="1.2" height="1.2" fill="#737f6f" opacity="0.50"/><rect x="6.7" y="31.1" width="1.2" height="1.2" fill="#9aa596" opacity="0.48"/><rect x="23.3" y="2.8" width="1.2" height="1.2" fill="#737f6f" opacity="0.79"/><rect x="4.0" y="28.3" width="1.2" height="1.2" fill="#9aa596" opacity="0.37"/><rect x="21.4" y="7.8" width="1.2" height="1.2" fill="#9aa596" opacity="0.66"/><rect x="22.4" y="12.6" width="1.2" height="1.2" fill="#9aa596" opacity="0.70"/><rect x="34.0" y="6.2" width="1.2" height="1.2" fill="#9aa596" opacity="0.47"/><rect x="6.1" y="18.0" width="1.2" height="1.2" fill="#9aa596" opacity="0.55"/><rect x="23.9" y="9.1" width="1.2" height="1.2" fill="#9aa596" opacity="0.43"/><rect x="6.0" y="20.5" width="1.2" height="1.2" fill="#9aa596" opacity="0.75"/><rect x="26.5" y="18.1" width="1.2" height="1.2" fill="#737f6f" opacity="0.63"/><rect x="11.9" y="6.9" width="1.2" height="1.2" fill="#737f6f" opacity="0.54"/><rect x="30.2" y="36.3" width="1.2" height="1.2" fill="#737f6f" opacity="0.57"/><rect x="2.6" y="24.5" width="1.2" height="1.2" fill="#737f6f" opacity="0.67"/><rect x="24.6" y="22.5" width="1.2" height="1.2" fill="#2c342b" opacity="0.39"/><rect x="33.7" y="40.4" width="1.2" height="1.2" fill="#9aa596" opacity="0.37"/><rect x="26.6" y="12.6" width="1.2" height="1.2" fill="#9aa596" opacity="0.68"/><rect x="33.8" y="33.1" width="1.2" height="1.2" fill="#9aa596" opacity="0.70"/><rect x="34.0" y="2.7" width="1.2" height="1.2" fill="#9aa596" opacity="0.51"/><rect x="24.5" y="13.0" width="1.2" height="1.2" fill="#9aa596" opacity="0.70"/><rect x="16.5" y="17.2" width="1.2" height="1.2" fill="#737f6f" opacity="0.45"/><rect x="30.7" y="35.9" width="1.2" height="1.2" fill="#2c342b" opacity="0.67"/><rect x="33.5" y="6.7" width="1.2" height="1.2" fill="#737f6f" opacity="0.62"/><rect x="32.7" y="33.7" width="1.2" height="1.2" fill="#9aa596" opacity="0.36"/><rect x="4.2" y="29.1" width="1.2" height="1.2" fill="#9aa596" opacity="0.34"/><rect x="13.7" y="29.6" width="1.2" height="1.2" fill="#9aa596" opacity="0.74"/><rect x="26.7" y="21.6" width="1.2" height="1.2" fill="#2c342b" opacity="0.75"/><rect x="21.5" y="36.4" width="1.2" height="1.2" fill="#2c342b" opacity="0.54"/><rect x="9.0" y="2.4" width="1.2" height="1.2" fill="#9aa596" opacity="0.37"/><rect x="32.6" y="17.6" width="1.2" height="1.2" fill="#2c342b" opacity="0.59"/><rect x="32.2" y="30.0" width="1.2" height="1.2" fill="#9aa596" opacity="0.63"/><rect x="4.9" y="13.0" width="1.2" height="1.2" fill="#2c342b" opacity="0.41"/><rect x="8.7" y="20.9" width="1.2" height="1.2" fill="#2c342b" opacity="0.57"/><rect x="31.5" y="40.9" width="1.2" height="1.2" fill="#9aa596" opacity="0.59"/><rect x="20.7" y="3.6" width="1.2" height="1.2" fill="#737f6f" opacity="0.65"/><rect x="3.3" y="26.1" width="1.2" height="1.2" fill="#9aa596" opacity="0.42"/><rect x="34.9" y="27.4" width="1.2" height="1.2" fill="#2c342b" opacity="0.31"/><rect x="12.5" y="0.1" width="1.2" height="1.2" fill="#737f6f" opacity="0.35"/><rect x="5.2" y="38.2" width="1.2" height="1.2" fill="#9aa596" opacity="0.49"/><rect x="19.8" y="8.3" width="1.2" height="1.2" fill="#9aa596" opacity="0.77"/><rect x="25.2" y="39.1" width="1.2" height="1.2" fill="#2c342b" opacity="0.51"/><rect x="25.1" y="22.4" width="1.2" height="1.2" fill="#2c342b" opacity="0.55"/><rect x="25.3" y="31.8" width="1.2" height="1.2" fill="#9aa596" opacity="0.68"/><rect x="18.7" y="40.9" width="1.2" height="1.2" fill="#9aa596" opacity="0.52"/><rect x="0.9" y="1.0" width="1.2" height="1.2" fill="#9aa596" opacity="0.49"/><rect x="23.7" y="33.1" width="1.2" height="1.2" fill="#2c342b" opacity="0.61"/><rect x="4.1" y="39.8" width="1.2" height="1.2" fill="#737f6f" opacity="0.74"/><rect x="15.4" y="24.9" width="1.2" height="1.2" fill="#2c342b" opacity="0.73"/><rect x="8.6" y="28.0" width="1.2" height="1.2" fill="#2c342b" opacity="0.69"/><rect x="24.2" y="26.4" width="1.2" height="1.2" fill="#2c342b" opacity="0.54"/><rect x="30.3" y="7.7" width="1.2" height="1.2" fill="#9aa596" opacity="0.43"/><rect x="23.6" y="40.6" width="1.2" height="1.2" fill="#737f6f" opacity="0.48"/><rect x="11.2" y="27.9" width="1.2" height="1.2" fill="#737f6f" opacity="0.58"/><rect x="26.3" y="22.3" width="1.2" height="1.2" fill="#2c342b" opacity="0.51"/><rect x="13.8" y="18.5" width="1.2" height="1.2" fill="#737f6f" opacity="0.45"/><rect x="23.6" y="15.1" width="1.2" height="1.2" fill="#9aa596" opacity="0.51"/><rect x="5.9" y="19.3" width="1.2" height="1.2" fill="#9aa596" opacity="0.58"/><rect x="15.3" y="15.0" width="1.2" height="1.2" fill="#737f6f" opacity="0.30"/><rect x="2.2" y="15.3" width="1.2" height="1.2" fill="#737f6f" opacity="0.37"/><rect x="18.8" y="6.6" width="1.2" height="1.2" fill="#2c342b" opacity="0.41"/><rect x="34.3" y="11.8" width="1.2" height="1.2" fill="#9aa596" opacity="0.73"/><rect x="29.9" y="27.8" width="1.2" height="1.2" fill="#9aa596" opacity="0.63"/><rect x="19.0" y="2.2" width="1.2" height="1.2" fill="#9aa596" opacity="0.60"/><rect x="5.7" y="26.4" width="1.2" height="1.2" fill="#9aa596" opacity="0.55"/><rect x="28.4" y="38.7" width="1.2" height="1.2" fill="#2c342b" opacity="0.36"/><rect x="8.4" y="30.8" width="1.2" height="1.2" fill="#9aa596" opacity="0.37"/><rect x="34.6" y="29.4" width="1.2" height="1.2" fill="#9aa596" opacity="0.50"/><rect x="22.4" y="4.8" width="1.2" height="1.2" fill="#9aa596" opacity="0.79"/><rect x="29.2" y="7.2" width="1.2" height="1.2" fill="#9aa596" opacity="0.54"/><rect x="23.8" y="20.7" width="1.2" height="1.2" fill="#2c342b" opacity="0.57"/><rect x="16.7" y="15.1" width="1.2" height="1.2" fill="#737f6f" opacity="0.32"/><rect x="2.5" y="7.3" width="1.2" height="1.2" fill="#2c342b" opacity="0.73"/><rect x="29.6" y="35.6" width="1.2" height="1.2" fill="#9aa596" opacity="0.34"/><rect x="14.0" y="3.2" width="1.2" height="1.2" fill="#9aa596" opacity="0.41"/><rect x="28.9" y="13.7" width="1.2" height="1.2" fill="#9aa596" opacity="0.51"/><rect x="28.8" y="29.4" width="1.2" height="1.2" fill="#9aa596" opacity="0.51"/><rect x="15.6" y="4.6" width="1.2" height="1.2" fill="#737f6f" opacity="0.37"/><rect x="12.5" y="22.9" width="1.2" height="1.2" fill="#2c342b" opacity="0.53"/><rect x="32.3" y="12.2" width="1.2" height="1.2" fill="#9aa596" opacity="0.69"/><rect x="9.7" y="32.0" width="1.2" height="1.2" fill="#9aa596" opacity="0.43"/><rect x="12.0" y="18.4" width="1.2" height="1.2" fill="#9aa596" opacity="0.52"/><rect x="3.3" y="14.1" width="1.2" height="1.2" fill="#9aa596" opacity="0.30"/><rect x="9.5" y="8.8" width="1.2" height="1.2" fill="#2c342b" opacity="0.46"/><rect x="15.9" y="33.0" width="1.2" height="1.2" fill="#9aa596" opacity="0.43"/><rect x="19.1" y="36.4" width="1.2" height="1.2" fill="#2c342b" opacity="0.47"/><rect x="5.5" y="1.1" width="1.2" height="1.2" fill="#9aa596" opacity="0.39"/><rect x="22.6" y="7.9" width="1.2" height="1.2" fill="#737f6f" opacity="0.64"/><rect x="1.4" y="27.3" width="1.2" height="1.2" fill="#9aa596" opacity="0.58"/><rect x="22.9" y="1.9" width="1.2" height="1.2" fill="#2c342b" opacity="0.46"/><rect x="24.8" y="27.0" width="1.2" height="1.2" fill="#737f6f" opacity="0.52"/><rect x="30.1" y="29.1" width="1.2" height="1.2" fill="#9aa596" opacity="0.54"/><rect x="6.5" y="12.5" width="1.2" height="1.2" fill="#9aa596" opacity="0.37"/><rect x="16.1" y="21.3" width="1.2" height="1.2" fill="#9aa596" opacity="0.71"/><rect x="30.8" y="18.9" width="1.2" height="1.2" fill="#9aa596" opacity="0.69"/><rect x="33.6" y="23.0" width="1.2" height="1.2" fill="#737f6f" opacity="0.53"/><rect x="32.8" y="24.5" width="1.2" height="1.2" fill="#9aa596" opacity="0.44"/><rect x="33.2" y="15.0" width="1.2" height="1.2" fill="#9aa596" opacity="0.40"/><rect x="16.7" y="28.7" width="1.2" height="1.2" fill="#9aa596" opacity="0.45"/><rect x="1.8" y="39.7" width="1.2" height="1.2" fill="#2c342b" opacity="0.35"/><rect x="12.3" y="32.2" width="1.2" height="1.2" fill="#9aa596" opacity="0.60"/><rect x="10.5" y="17.8" width="1.2" height="1.2" fill="#9aa596" opacity="0.72"/><rect x="5.9" y="32.3" width="1.2" height="1.2" fill="#9aa596" opacity="0.72"/><rect x="0.5" y="26.4" width="1.2" height="1.2" fill="#737f6f" opacity="0.78"/><rect x="10.0" y="29.4" width="1.2" height="1.2" fill="#737f6f" opacity="0.53"/><rect x="32.6" y="16.2" width="1.2" height="1.2" fill="#737f6f" opacity="0.58"/><rect x="24.6" y="7.0" width="1.2" height="1.2" fill="#737f6f" opacity="0.37"/><rect x="18.7" y="13.9" width="1.2" height="1.2" fill="#2c342b" opacity="0.40"/><rect x="19.4" y="4.9" width="1.2" height="1.2" fill="#9aa596" opacity="0.69"/><rect x="26.2" y="37.6" width="1.2" height="1.2" fill="#9aa596" opacity="0.75"/><rect x="19.7" y="10.3" width="1.2" height="1.2" fill="#9aa596" opacity="0.43"/><rect x="12.6" y="0.3" width="1.2" height="1.2" fill="#2c342b" opacity="0.66"/><rect x="13.9" y="33.6" width="1.2" height="1.2" fill="#9aa596" opacity="0.61"/><rect x="1.4" y="34.0" width="1.2" height="1.2" fill="#9aa596" opacity="0.51"/><rect x="15.2" y="33.5" width="1.2" height="1.2" fill="#9aa596" opacity="0.79"/><rect x="0.1" y="9.3" width="1.2" height="1.2" fill="#9aa596" opacity="0.42"/><rect x="28.1" y="20.6" width="1.2" height="1.2" fill="#2c342b" opacity="0.51"/><rect x="27.1" y="9.6" width="1.2" height="1.2" fill="#737f6f" opacity="0.33"/><rect x="0.0" y="2.7" width="1.2" height="1.2" fill="#9aa596" opacity="0.32"/><rect x="34.0" y="23.0" width="1.2" height="1.2" fill="#9aa596" opacity="0.70"/><rect x="9.6" y="17.0" width="1.2" height="1.2" fill="#737f6f" opacity="0.32"/><rect x="2.7" y="19.4" width="1.2" height="1.2" fill="#2c342b" opacity="0.46"/><rect x="0.3" y="34.0" width="1.2" height="1.2" fill="#2c342b" opacity="0.65"/><rect x="4.6" y="37.5" width="1.2" height="1.2" fill="#9aa596" opacity="0.45"/><rect x="24.2" y="13.5" width="1.2" height="1.2" fill="#9aa596" opacity="0.46"/><rect x="16.5" y="24.8" width="1.2" height="1.2" fill="#9aa596" opacity="0.78"/><rect x="5.5" y="28.6" width="1.2" height="1.2" fill="#2c342b" opacity="0.64"/><rect x="7.4" y="27.0" width="1.2" height="1.2" fill="#2c342b" opacity="0.65"/><rect x="6.4" y="1.7" width="1.2" height="1.2" fill="#9aa596" opacity="0.65"/><rect x="4.3" y="5.3" width="1.2" height="1.2" fill="#9aa596" opacity="0.48"/><rect x="23.4" y="15.7" width="1.2" height="1.2" fill="#737f6f" opacity="0.75"/><rect x="22.7" y="39.9" width="1.2" height="1.2" fill="#9aa596" opacity="0.79"/><rect x="16.3" y="37.9" width="1.2" height="1.2" fill="#9aa596" opacity="0.71"/><rect x="26.7" y="6.1" width="1.2" height="1.2" fill="#2c342b" opacity="0.78"/><rect x="21.8" y="4.4" width="1.2" height="1.2" fill="#2c342b" opacity="0.74"/><rect x="13.4" y="33.2" width="1.2" height="1.2" fill="#737f6f" opacity="0.80"/><rect x="30.9" y="33.7" width="1.2" height="1.2" fill="#2c342b" opacity="0.32"/><rect x="0.8" y="1.3" width="1.2" height="1.2" fill="#9aa596" opacity="0.71"/><rect x="29.9" y="17.4" width="1.2" height="1.2" fill="#2c342b" opacity="0.71"/><rect x="29.9" y="20.9" width="1.2" height="1.2" fill="#737f6f" opacity="0.58"/><rect x="17.5" y="13.0" width="1.2" height="1.2" fill="#2c342b" opacity="0.69"/><rect x="20.6" y="6.9" width="1.2" height="1.2" fill="#2c342b" opacity="0.35"/><rect x="29.9" y="7.2" width="1.2" height="1.2" fill="#9aa596" opacity="0.72"/><rect x="26.8" y="12.0" width="1.2" height="1.2" fill="#9aa596" opacity="0.47"/><rect x="15.0" y="30.3" width="1.2" height="1.2" fill="#737f6f" opacity="0.62"/><rect x="11.8" y="23.3" width="1.2" height="1.2" fill="#2c342b" opacity="0.48"/><rect x="28.0" y="8.8" width="1.2" height="1.2" fill="#9aa596" opacity="0.51"/><rect x="15.9" y="6.9" width="1.2" height="1.2" fill="#9aa596" opacity="0.55"/><rect x="4.4" y="29.5" width="1.2" height="1.2" fill="#2c342b" opacity="0.70"/><rect x="34.9" y="1.9" width="1.2" height="1.2" fill="#737f6f" opacity="0.36"/><rect x="28.8" y="0.0" width="1.2" height="1.2" fill="#2c342b" opacity="0.46"/><rect x="2.0" y="12.2" width="1.2" height="1.2" fill="#737f6f" opacity="0.51"/><rect x="18.9" y="36.5" width="1.2" height="1.2" fill="#2c342b" opacity="0.73"/><rect x="34.4" y="29.6" width="1.2" height="1.2" fill="#9aa596" opacity="0.37"/><rect x="15.2" y="23.3" width="1.2" height="1.2" fill="#2c342b" opacity="0.42"/><rect x="6.2" y="1.1" width="1.2" height="1.2" fill="#9aa596" opacity="0.31"/><rect x="5.6" y="25.1" width="1.2" height="1.2" fill="#9aa596" opacity="0.46"/><rect x="28.5" y="34.2" width="1.2" height="1.2" fill="#2c342b" opacity="0.48"/><rect x="6.3" y="19.7" width="1.2" height="1.2" fill="#737f6f" opacity="0.65"/><rect x="18.1" y="38.3" width="1.2" height="1.2" fill="#737f6f" opacity="0.46"/><rect x="2.7" y="36.0" width="1.2" height="1.2" fill="#9aa596" opacity="0.54"/><rect x="27.8" y="31.6" width="1.2" height="1.2" fill="#9aa596" opacity="0.31"/><rect x="32.1" y="12.6" width="1.2" height="1.2" fill="#9aa596" opacity="0.44"/><rect x="14.7" y="19.8" width="1.2" height="1.2" fill="#9aa596" opacity="0.42"/><rect x="28.2" y="0.2" width="1.2" height="1.2" fill="#9aa596" opacity="0.70"/><rect x="19.8" y="27.7" width="1.2" height="1.2" fill="#9aa596" opacity="0.45"/><rect x="4.8" y="37.7" width="1.2" height="1.2" fill="#2c342b" opacity="0.43"/><rect x="30.9" y="29.8" width="1.2" height="1.2" fill="#737f6f" opacity="0.69"/><rect x="13.1" y="28.4" width="1.2" height="1.2" fill="#737f6f" opacity="0.51"/><rect x="21.4" y="17.0" width="1.2" height="1.2" fill="#9aa596" opacity="0.50"/><rect x="3.5" y="36.1" width="1.2" height="1.2" fill="#737f6f" opacity="0.39"/><rect x="27.0" y="26.5" width="1.2" height="1.2" fill="#9aa596" opacity="0.70"/><rect x="18.6" y="8.9" width="1.2" height="1.2" fill="#737f6f" opacity="0.36"/><rect x="3.2" y="33.4" width="1.2" height="1.2" fill="#737f6f" opacity="0.59"/><rect x="17.6" y="26.8" width="1.2" height="1.2" fill="#9aa596" opacity="0.54"/><rect x="5.2" y="34.8" width="1.2" height="1.2" fill="#737f6f" opacity="0.44"/><rect x="11.2" y="10.4" width="1.2" height="1.2" fill="#2c342b" opacity="0.68"/><rect x="32.2" y="10.8" width="1.2" height="1.2" fill="#2c342b" opacity="0.72"/><rect x="11.2" y="11.7" width="1.2" height="1.2" fill="#9aa596" opacity="0.69"/><rect x="8.3" y="7.7" width="1.2" height="1.2" fill="#9aa596" opacity="0.46"/><rect x="3.9" y="34.2" width="1.2" height="1.2" fill="#737f6f" opacity="0.54"/><rect x="2.6" y="29.8" width="1.2" height="1.2" fill="#737f6f" opacity="0.50"/><rect x="16.7" y="25.5" width="1.2" height="1.2" fill="#9aa596" opacity="0.68"/><rect x="20.7" y="14.5" width="1.2" height="1.2" fill="#9aa596" opacity="0.46"/><rect x="5.0" y="1.8" width="1.2" height="1.2" fill="#9aa596" opacity="0.39"/><rect x="31.1" y="0.3" width="1.2" height="1.2" fill="#9aa596" opacity="0.73"/><rect x="11.3" y="14.0" width="1.2" height="1.2" fill="#9aa596" opacity="0.41"/><rect x="27.2" y="3.1" width="1.2" height="1.2" fill="#9aa596" opacity="0.46"/><rect x="14.9" y="35.6" width="1.2" height="1.2" fill="#9aa596" opacity="0.35"/><rect x="1.3" y="22.8" width="1.2" height="1.2" fill="#9aa596" opacity="0.75"/><rect x="10.6" y="18.1" width="1.2" height="1.2" fill="#9aa596" opacity="0.66"/><rect x="21.3" y="34.2" width="1.2" height="1.2" fill="#737f6f" opacity="0.78"/><rect x="30.2" y="24.7" width="1.2" height="1.2" fill="#737f6f" opacity="0.42"/><rect x="21.9" y="23.5" width="1.2" height="1.2" fill="#737f6f" opacity="0.45"/><rect x="26.0" y="8.9" width="1.2" height="1.2" fill="#9aa596" opacity="0.31"/><rect x="29.8" y="25.4" width="1.2" height="1.2" fill="#9aa596" opacity="0.69"/><rect x="32.8" y="24.7" width="1.2" height="1.2" fill="#2c342b" opacity="0.48"/><rect x="16.6" y="13.9" width="1.2" height="1.2" fill="#9aa596" opacity="0.36"/><rect x="7.9" y="31.5" width="1.2" height="1.2" fill="#9aa596" opacity="0.45"/><rect x="13.5" y="39.1" width="1.2" height="1.2" fill="#737f6f" opacity="0.64"/><rect x="19.1" y="0.9" width="1.2" height="1.2" fill="#9aa596" opacity="0.58"/><rect x="2.8" y="13.9" width="1.2" height="1.2" fill="#9aa596" opacity="0.76"/><rect x="31.0" y="15.6" width="1.2" height="1.2" fill="#2c342b" opacity="0.70"/><rect x="20.8" y="10.7" width="1.2" height="1.2" fill="#9aa596" opacity="0.34"/><rect x="15.9" y="32.5" width="1.2" height="1.2" fill="#2c342b" opacity="0.36"/><rect x="27.1" y="12.8" width="1.2" height="1.2" fill="#9aa596" opacity="0.71"/><rect x="30.9" y="32.0" width="1.2" height="1.2" fill="#2c342b" opacity="0.46"/><rect x="25.6" y="30.5" width="1.2" height="1.2" fill="#9aa596" opacity="0.40"/><rect x="16.5" y="17.3" width="1.2" height="1.2" fill="#737f6f" opacity="0.66"/><rect x="14.0" y="36.2" width="1.2" height="1.2" fill="#2c342b" opacity="0.37"/><rect x="24.1" y="18.2" width="1.2" height="1.2" fill="#737f6f" opacity="0.38"/><rect x="12.4" y="4.0" width="1.2" height="1.2" fill="#737f6f" opacity="0.36"/><rect x="11.2" y="1.9" width="1.2" height="1.2" fill="#9aa596" opacity="0.65"/><rect x="5.7" y="0.4" width="1.2" height="1.2" fill="#2c342b" opacity="0.43"/><rect x="20.2" y="33.6" width="1.2" height="1.2" fill="#9aa596" opacity="0.74"/><rect x="21.5" y="19.0" width="1.2" height="1.2" fill="#737f6f" opacity="0.77"/><rect x="10.7" y="34.4" width="1.2" height="1.2" fill="#9aa596" opacity="0.75"/><rect x="31.7" y="17.9" width="1.2" height="1.2" fill="#9aa596" opacity="0.62"/><rect x="16.3" y="11.0" width="1.2" height="1.2" fill="#737f6f" opacity="0.67"/><rect x="10.4" y="11.1" width="1.2" height="1.2" fill="#9aa596" opacity="0.77"/><rect x="5.9" y="14.0" width="1.2" height="1.2" fill="#2c342b" opacity="0.57"/><rect x="23.6" y="6.3" width="1.2" height="1.2" fill="#737f6f" opacity="0.36"/><rect x="2.1" y="0.6" width="1.2" height="1.2" fill="#9aa596" opacity="0.61"/><rect x="31.9" y="34.8" width="1.2" height="1.2" fill="#2c342b" opacity="0.78"/><rect x="10.8" y="31.8" width="1.2" height="1.2" fill="#9aa596" opacity="0.40"/><rect x="14.4" y="19.8" width="1.2" height="1.2" fill="#9aa596" opacity="0.65"/><rect x="23.1" y="16.8" width="1.2" height="1.2" fill="#2c342b" opacity="0.58"/><rect x="2.7" y="10.7" width="1.2" height="1.2" fill="#9aa596" opacity="0.74"/><rect x="33.9" y="13.6" width="1.2" height="1.2" fill="#9aa596" opacity="0.31"/><rect x="19.2" y="3.9" width="1.2" height="1.2" fill="#2c342b" opacity="0.53"/><rect x="29.4" y="26.9" width="1.2" height="1.2" fill="#9aa596" opacity="0.78"/><rect x="10.3" y="5.5" width="1.2" height="1.2" fill="#9aa596" opacity="0.72"/><rect x="4.1" y="13.5" width="1.2" height="1.2" fill="#9aa596" opacity="0.46"/><rect x="14.4" y="17.1" width="1.2" height="1.2" fill="#9aa596" opacity="0.70"/><rect x="2.2" y="13.5" width="1.2" height="1.2" fill="#9aa596" opacity="0.73"/><rect x="1.1" y="34.4" width="1.2" height="1.2" fill="#737f6f" opacity="0.38"/><rect x="0.2" y="18.2" width="1.2" height="1.2" fill="#737f6f" opacity="0.56"/><rect x="0.9" y="38.4" width="1.2" height="1.2" fill="#9aa596" opacity="0.67"/><rect x="15.4" y="10.0" width="1.2" height="1.2" fill="#2c342b" opacity="0.73"/><rect x="27.9" y="6.8" width="1.2" height="1.2" fill="#9aa596" opacity="0.41"/><rect x="22.6" y="15.0" width="1.2" height="1.2" fill="#9aa596" opacity="0.59"/><rect x="14.9" y="7.2" width="1.2" height="1.2" fill="#9aa596" opacity="0.65"/><rect x="33.2" y="39.2" width="1.2" height="1.2" fill="#9aa596" opacity="0.66"/><rect x="14.9" y="3.0" width="1.2" height="1.2" fill="#9aa596" opacity="0.45"/><rect x="7.7" y="25.0" width="1.2" height="1.2" fill="#9aa596" opacity="0.35"/><rect x="0.6" y="0.5" width="1.2" height="1.2" fill="#9aa596" opacity="0.67"/><rect x="30.8" y="38.2" width="1.2" height="1.2" fill="#9aa596" opacity="0.36"/><rect x="4.8" y="31.7" width="1.2" height="1.2" fill="#9aa596" opacity="0.43"/><rect x="18.7" y="29.9" width="1.2" height="1.2" fill="#2c342b" opacity="0.40"/><rect x="6.3" y="13.5" width="1.2" height="1.2" fill="#2c342b" opacity="0.62"/><rect x="7.4" y="4.4" width="1.2" height="1.2" fill="#737f6f" opacity="0.65"/><rect x="24.9" y="12.7" width="1.5" height="1.3" fill="#2c342b" opacity="0.94"/><rect x="20.1" y="6.7" width="1.5" height="1.3" fill="#2c342b" opacity="0.57"/><rect x="23.9" y="9.1" width="1.5" height="1.3" fill="#2c342b" opacity="0.64"/><rect x="17.8" y="26.9" width="1.5" height="1.3" fill="#2c342b" opacity="0.61"/><rect x="21.5" y="16.0" width="1.5" height="1.3" fill="#2c342b" opacity="0.77"/><rect x="23.3" y="14.5" width="1.5" height="1.3" fill="#2c342b" opacity="0.54"/><rect x="23.9" y="4.7" width="1.5" height="1.3" fill="#2c342b" opacity="0.64"/><rect x="21.7" y="18.5" width="1.5" height="1.3" fill="#2c342b" opacity="0.60"/><rect x="20.1" y="22.4" width="1.5" height="1.3" fill="#2c342b" opacity="0.52"/><rect x="20.7" y="7.1" width="1.5" height="1.3" fill="#2c342b" opacity="0.64"/><rect x="17.7" y="20.5" width="1.5" height="1.3" fill="#2c342b" opacity="0.60"/><rect x="15.6" y="23.3" width="1.5" height="1.3" fill="#2c342b" opacity="0.82"/><rect x="18.2" y="22.6" width="1.5" height="1.3" fill="#2c342b" opacity="0.51"/><rect x="22.9" y="17.6" width="1.5" height="1.3" fill="#2c342b" opacity="0.74"/><rect x="17.9" y="21.1" width="1.5" height="1.3" fill="#2c342b" opacity="0.54"/><rect x="13.1" y="27.8" width="1.5" height="1.3" fill="#2c342b" opacity="0.54"/><rect x="21.3" y="2.6" width="1.5" height="1.3" fill="#2c342b" opacity="0.82"/><rect x="22.2" y="5.7" width="1.5" height="1.3" fill="#2c342b" opacity="0.50"/><rect x="18.5" y="23.7" width="1.5" height="1.3" fill="#2c342b" opacity="0.87"/><rect x="22.7" y="10.1" width="1.5" height="1.3" fill="#2c342b" opacity="0.56"/><rect x="16.0" y="24.5" width="1.5" height="1.3" fill="#2c342b" opacity="0.80"/><rect x="21.0" y="2.5" width="1.5" height="1.3" fill="#2c342b" opacity="0.87"/><rect x="22.4" y="4.7" width="1.5" height="1.3" fill="#2c342b" opacity="0.71"/><rect x="23.9" y="13.9" width="1.5" height="1.3" fill="#2c342b" opacity="0.93"/><rect x="20.8" y="11.5" width="1.5" height="1.3" fill="#2c342b" opacity="0.81"/><rect x="15.2" y="26.4" width="1.5" height="1.3" fill="#2c342b" opacity="0.89"/><rect x="14.3" y="25.6" width="1.5" height="1.3" fill="#2c342b" opacity="0.51"/><rect x="20.9" y="1.7" width="1.5" height="1.3" fill="#2c342b" opacity="0.71"/><rect x="19.0" y="19.1" width="1.5" height="1.3" fill="#2c342b" opacity="0.63"/><rect x="23.1" y="9.4" width="1.5" height="1.3" fill="#2c342b" opacity="0.90"/><rect x="16.2" y="24.5" width="1.5" height="1.3" fill="#2c342b" opacity="0.79"/><rect x="24.3" y="3.4" width="1.5" height="1.3" fill="#2c342b" opacity="0.74"/><rect x="24.3" y="11.3" width="1.5" height="1.3" fill="#2c342b" opacity="0.87"/><rect x="16.5" y="23.8" width="1.5" height="1.3" fill="#2c342b" opacity="0.59"/><rect x="24.2" y="11.8" width="1.5" height="1.3" fill="#2c342b" opacity="0.90"/><rect x="23.9" y="13.5" width="1.5" height="1.3" fill="#2c342b" opacity="0.65"/><rect x="20.2" y="6.1" width="1.5" height="1.3" fill="#2c342b" opacity="0.72"/><rect x="22.0" y="2.8" width="1.5" height="1.3" fill="#2c342b" opacity="0.63"/><rect x="22.5" y="1.8" width="1.5" height="1.3" fill="#2c342b" opacity="0.60"/><rect x="21.5" y="13.3" width="1.5" height="1.3" fill="#2c342b" opacity="0.89"/><rect x="24.2" y="5.3" width="1.5" height="1.3" fill="#2c342b" opacity="0.67"/><rect x="21.3" y="17.0" width="1.5" height="1.3" fill="#2c342b" opacity="0.76"/><rect x="23.2" y="8.7" width="1.5" height="1.3" fill="#2c342b" opacity="0.67"/><rect x="23.9" y="11.4" width="1.5" height="1.3" fill="#2c342b" opacity="0.50"/><rect x="19.3" y="16.3" width="1.5" height="1.3" fill="#2c342b" opacity="0.68"/><rect x="22.3" y="1.4" width="1.5" height="1.3" fill="#2c342b" opacity="0.87"/><rect x="20.7" y="21.9" width="1.5" height="1.3" fill="#2c342b" opacity="0.73"/><rect x="17.7" y="25.2" width="1.5" height="1.3" fill="#2c342b" opacity="0.55"/><rect x="21.6" y="15.7" width="1.5" height="1.3" fill="#2c342b" opacity="0.65"/><rect x="20.6" y="8.0" width="1.5" height="1.3" fill="#2c342b" opacity="0.85"/><rect x="17.1" y="20.3" width="1.5" height="1.3" fill="#2c342b" opacity="0.91"/><rect x="21.8" y="2.6" width="1.5" height="1.3" fill="#2c342b" opacity="0.79"/><rect x="23.9" y="10.0" width="1.5" height="1.3" fill="#2c342b" opacity="0.94"/><rect x="20.1" y="19.7" width="1.5" height="1.3" fill="#2c342b" opacity="0.59"/><rect x="18.3" y="17.4" width="1.5" height="1.3" fill="#2c342b" opacity="0.92"/><rect x="20.7" y="2.2" width="1.5" height="1.3" fill="#2c342b" opacity="0.64"/><rect x="22.8" y="3.9" width="1.5" height="1.3" fill="#2c342b" opacity="0.66"/><rect x="17.8" y="20.1" width="1.5" height="1.3" fill="#2c342b" opacity="0.57"/><rect x="21.8" y="12.8" width="1.5" height="1.3" fill="#2c342b" opacity="0.92"/><rect x="19.9" y="23.5" width="1.5" height="1.3" fill="#2c342b" opacity="0.88"/><rect x="15.9" y="24.5" width="1.5" height="1.3" fill="#2c342b" opacity="0.57"/><rect x="20.6" y="13.4" width="1.5" height="1.3" fill="#2c342b" opacity="0.93"/><rect x="21.3" y="6.6" width="1.5" height="1.3" fill="#2c342b" opacity="0.74"/><rect x="15.8" y="26.3" width="1.5" height="1.3" fill="#2c342b" opacity="0.55"/><rect x="20.8" y="15.1" width="1.5" height="1.3" fill="#2c342b" opacity="0.75"/><rect x="22.7" y="12.0" width="1.5" height="1.3" fill="#2c342b" opacity="0.60"/><rect x="17.8" y="19.3" width="1.5" height="1.3" fill="#2c342b" opacity="0.89"/><rect x="20.4" y="16.0" width="1.5" height="1.3" fill="#2c342b" opacity="0.57"/><rect x="16.9" y="26.1" width="1.5" height="1.3" fill="#2c342b" opacity="0.71"/><rect x="16.2" y="22.7" width="1.5" height="1.3" fill="#2c342b" opacity="0.75"/><rect x="0" y="35" width="35" height="6" fill="#3d473b" opacity="0.55"/><rect x="2.3" y="36.3" width="1.3" height="1.3" fill="#2c342b" opacity="0.31"/><rect x="29.8" y="38.8" width="1.3" height="1.3" fill="#2c342b" opacity="0.66"/><rect x="23.5" y="37.3" width="1.3" height="1.3" fill="#2c342b" opacity="0.78"/><rect x="33.1" y="35.6" width="1.3" height="1.3" fill="#2c342b" opacity="0.80"/><rect x="23.0" y="40.6" width="1.3" height="1.3" fill="#2c342b" opacity="0.76"/><rect x="14.1" y="37.1" width="1.3" height="1.3" fill="#2c342b" opacity="0.51"/><rect x="3.5" y="38.1" width="1.3" height="1.3" fill="#2c342b" opacity="0.53"/><rect x="2.3" y="37.4" width="1.3" height="1.3" fill="#2c342b" opacity="0.41"/><rect x="19.7" y="37.2" width="1.3" height="1.3" fill="#2c342b" opacity="0.50"/><rect x="17.6" y="40.8" width="1.3" height="1.3" fill="#2c342b" opacity="0.62"/><rect x="11.1" y="39.0" width="1.3" height="1.3" fill="#2c342b" opacity="0.73"/><rect x="31.0" y="40.8" width="1.3" height="1.3" fill="#2c342b" opacity="0.41"/><rect x="5.6" y="37.6" width="1.3" height="1.3" fill="#2c342b" opacity="0.54"/><rect x="11.2" y="36.4" width="1.3" height="1.3" fill="#2c342b" opacity="0.64"/><rect x="29.7" y="36.0" width="1.3" height="1.3" fill="#2c342b" opacity="0.80"/><rect x="18.7" y="39.8" width="1.3" height="1.3" fill="#2c342b" opacity="0.47"/><rect x="9.4" y="38.7" width="1.3" height="1.3" fill="#2c342b" opacity="0.56"/><rect x="6.5" y="40.7" width="1.3" height="1.3" fill="#2c342b" opacity="0.52"/><rect x="31.9" y="35.8" width="1.3" height="1.3" fill="#2c342b" opacity="0.60"/><rect x="18.0" y="35.3" width="1.3" height="1.3" fill="#2c342b" opacity="0.74"/><rect x="9.3" y="39.0" width="1.3" height="1.3" fill="#2c342b" opacity="0.43"/><rect x="18.9" y="37.2" width="1.3" height="1.3" fill="#2c342b" opacity="0.35"/><rect x="8.9" y="36.2" width="1.3" height="1.3" fill="#2c342b" opacity="0.73"/><rect x="16.4" y="36.6" width="1.3" height="1.3" fill="#2c342b" opacity="0.50"/><rect x="31.5" y="35.2" width="1.3" height="1.3" fill="#2c342b" opacity="0.36"/><rect x="13.8" y="40.7" width="1.3" height="1.3" fill="#2c342b" opacity="0.76"/><rect x="27.1" y="35.7" width="1.3" height="1.3" fill="#2c342b" opacity="0.73"/><rect x="27.4" y="39.4" width="1.3" height="1.3" fill="#2c342b" opacity="0.42"/><rect x="12.0" y="35.1" width="1.3" height="1.3" fill="#2c342b" opacity="0.55"/><rect x="12.7" y="35.7" width="1.3" height="1.3" fill="#2c342b" opacity="0.36"/><rect x="20.7" y="39.5" width="1.3" height="1.3" fill="#2c342b" opacity="0.55"/><rect x="12.5" y="39.7" width="1.3" height="1.3" fill="#2c342b" opacity="0.66"/><rect x="18.7" y="38.8" width="1.3" height="1.3" fill="#2c342b" opacity="0.76"/><rect x="19.8" y="36.7" width="1.3" height="1.3" fill="#2c342b" opacity="0.44"/><rect x="4.4" y="38.3" width="1.3" height="1.3" fill="#2c342b" opacity="0.37"/><rect x="30.6" y="40.2" width="1.3" height="1.3" fill="#2c342b" opacity="0.49"/><rect x="30.2" y="40.2" width="1.3" height="1.3" fill="#2c342b" opacity="0.63"/><rect x="22.7" y="40.6" width="1.3" height="1.3" fill="#2c342b" opacity="0.56"/><rect x="20.0" y="36.3" width="1.3" height="1.3" fill="#2c342b" opacity="0.56"/><rect x="25.3" y="38.4" width="1.3" height="1.3" fill="#2c342b" opacity="0.65"/></g></svg></div>
<div class="pname" style="position:absolute;left:80.5px;top:57.5px;font-weight:bold;color:#1659d2;font-size:12.7px">Boots_PNG7799</div>
<div style="position:absolute;left:81px;top:75px;color:#555;font-size:12px"></div>
<div class="cell" style="left:282px;width:112px">￥432.00</div>
<div class="cell" style="left:395px;width:191px">买家账号<span class="fc">:</span>11111@qq.com</div>
<div class="cell" style="left:587px;width:168px">未添加物流信息</div>
<div class="cell" style="left:756px;width:113px">已下单</div>
<div class="cell" style="left:870px;width:253px;padding-right:14px"><span class="lk">订单详情</span><span style="margin:0 9px">|</span><span class="lk">导出此订单</span><span style="margin:0 9px">|</span><span class="lk">打印订单</span></div>
</div>
<div class="ord" style="top:690px">
<div class="ohd">订单号:C20191025131225<span style="position:absolute;left:198.5px">下单时间<span class="fc">:</span>(GMT+8)2019-10-25 18:57:49</span></div>
<div class="vl" style="left:281px"></div><div class="vl" style="left:394px"></div><div class="vl" style="left:586px"></div><div class="vl" style="left:755px"></div><div class="vl" style="left:869px"></div>
</div>


<svg class="abs" style="left:0;top:0" width="120" height="39" viewBox="0 0 120 39"><g fill="#c0c3c6"><polygon points="30.5,21.9 82.5,21.9 82,23.6 29.6,23.6"/><polygon points="55.9,10.1 76.8,10.1 76.6,11.2 55.7,11.2"/><polygon points="53.7,12.7 86.4,12.7 86.2,14.2 53.5,14.2"/><polygon points="48.5,10.1 54.1,10.1 53.4,12.2 47.8,12.2"/><polygon points="50.8,12.2 52.8,12.2 50.2,17.1 48.2,17.1"/><polygon points="41.2,15.3 54.5,15.3 54.3,16.5 41,16.5"/><polygon points="45.5,17.8 53.9,17.8 53.0,20.6 44.6,20.6"/><polygon points="53.8,16.5 55.4,16.5 53.8,22 52.2,22"/><polygon points="55,14.2 58.1,14.2 55.5,22 52.4,22"/><polygon points="62,14.2 63.5,14.2 60.3,22 58.8,22"/><polygon points="66.3,14.2 69.4,14.2 66.2,22 63.2,22"/><polygon points="72,14.2 74.2,14.2 71.2,22 69,22"/><polygon points="79.4,14.2 82,14.2 79,22 76.4,22"/><polygon points="84.2,14.2 86.8,14.2 83.8,22 81.2,22"/></g><g fill="none" stroke="#c0c3c6"><path d="M30.4,22.8 Q35.5,13 48.6,10.3" stroke-width="1.5"/><path d="M33.8,22 Q37,17 42,15.6" stroke-width="1.1"/><path d="M83.9,7.9 L78.5,21.6" stroke-width="1.1"/></g></svg>
<div class="abs" style="left:57px;top:47px;width:1px;height:13px;background:#a9b1b0"></div>
<div class="abs" style="left:59px;top:47px;width:1px;height:13px;background:#9fb0bb"></div>
<div class="abs" style="left:62px;top:47px;width:1px;height:13px;background:#b3b7a8"></div>

<svg class="abs" style="left:1331px;top:4px" width="28" height="28" viewBox="0 0 28 28"><circle cx="14" cy="14" r="14" fill="#87898c"/><circle cx="14" cy="10.2" r="4.2" fill="#fff"/><path d="M8,21.3 Q8.5,15 14,15 Q19.5,15 20,21.3 Z" fill="#fff"/></svg>
<div class="abs" style="left:1370px;top:0;line-height:37px;font-size:16.6px;color:#fff">demo</div>
<div class="abs" style="left:1418px;top:15px;width:0;height:0;border-left:5px solid transparent;border-right:5px solid transparent;border-top:5px solid #fff"></div>

<div class="abs" style="left:235px;top:393px;width:24px;height:26px;background:#f7f7f7;border:1px solid #d0d0d0;border-right:none;border-radius:4px 3px 3px 4px"></div>
<svg class="abs" style="left:240px;top:400px" width="15" height="12" viewBox="0 0 15 12" fill="#a6a6a6"><rect x="0" y="0.5" width="14" height="1.6"/><rect x="5" y="3.5" width="9" height="1.6"/><rect x="5" y="6.5" width="9" height="1.6"/><rect x="0" y="9.5" width="14" height="1.6"/><path d="M0 5.5 L3 3 V8 Z"/></svg>

<svg class="abs" style="left:120px;top:106px" width="110" height="40"><rect x="4.8" y="5.1" width="98" height="27.5" rx="5.5" fill="none" stroke="#ff0019" stroke-width="3.4"/></svg>
<svg class="abs" style="left:0;top:240px" width="120" height="50"><rect x="7.9" y="6.5" width="103.3" height="35.3" rx="6" fill="none" stroke="#ff0019" stroke-width="3.4"/></svg>
<svg class="abs" style="left:0;top:0" width="200" height="240" viewBox="0 0 200 240"><polygon points="103.5,219.5 130,166.8 125.2,163.8 141,154 141.6,172.6 137.3,169.6 106.8,221.5" fill="#fe0000"/></svg>
<div class="abs" style="left:290px;top:750px;width:850px;height:60px;border-radius:30px;box-shadow:0 0 45px 10px rgba(0,0,0,0.09)"></div>
</body></html>
